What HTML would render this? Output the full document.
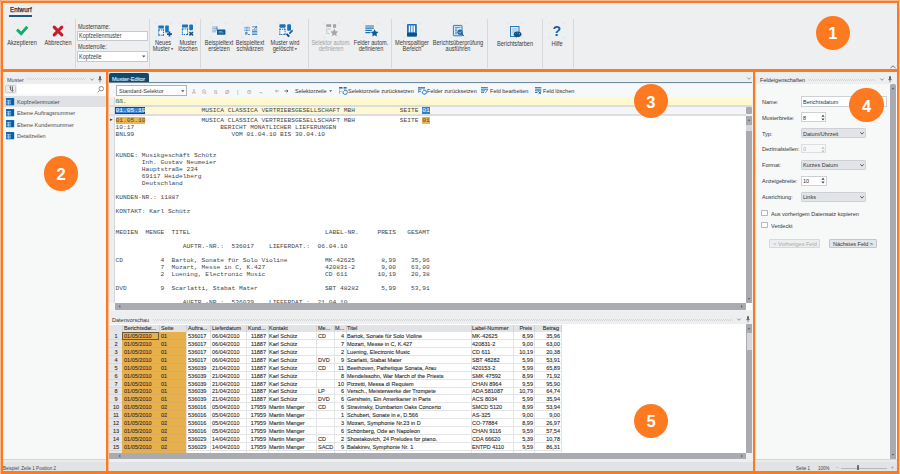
<!DOCTYPE html><html><head><meta charset="utf-8"><style>
html,body{margin:0;padding:0}
body{width:900px;height:474px;overflow:hidden;position:relative;background:#eeeff1;font-family:"Liberation Sans",sans-serif}
div{position:absolute;box-sizing:border-box}
.t{white-space:nowrap;line-height:1}
.r{}
.g{-webkit-text-stroke:0.12px currentColor}
.m{font-family:"Liberation Mono",monospace;white-space:pre;line-height:7px;font-size:6.242px;color:#464646}
svg{position:absolute;overflow:visible}
</style></head><body>
<div class="t" style="left:9.8px;top:7.09px;font-size:6.82px;color:#2a2a2a;transform:scaleX(0.900);transform-origin:0 0;-webkit-text-stroke:0.25px #2a2a2a;letter-spacing:0.15px">Entwurf</div>
<div style="left:9px;top:15px;width:23px;height:2px;background:#1f5a7c;"></div>
<div style="left:75px;top:19px;width:1px;height:49px;background:#d6d8db;"></div>
<div style="left:149px;top:19px;width:1px;height:49px;background:#d6d8db;"></div>
<div style="left:200px;top:19px;width:1px;height:49px;background:#d6d8db;"></div>
<div style="left:308px;top:19px;width:1px;height:49px;background:#d6d8db;"></div>
<div style="left:391px;top:19px;width:1px;height:49px;background:#d6d8db;"></div>
<div style="left:487px;top:19px;width:1px;height:49px;background:#d6d8db;"></div>
<div style="left:542px;top:19px;width:1px;height:49px;background:#d6d8db;"></div>
<div style="left:573px;top:19px;width:1px;height:49px;background:#d6d8db;"></div>
<svg style="left:15px;top:25px" width="14" height="12" viewBox="0 0 14 12"><path d="M2 4.6 L6.2 8.6 L12.3 1.8" fill="none" stroke="#16ad6c" stroke-width="2.9" stroke-linecap="butt" stroke-linejoin="miter"/></svg>
<svg style="left:52px;top:25px" width="12" height="12" viewBox="0 0 12 12"><path d="M2.2 2.2 L9.8 9.8 M9.8 2.2 L2.2 9.8" fill="none" stroke="#c41f29" stroke-width="3.1" stroke-linecap="round"/></svg>
<svg style="left:0;top:0" width="900" height="70"><path d="M14.2 24.6V23H15.799999999999999 M28.2 23H29.8V24.6 M14.2 36.1V37.7H15.799999999999999 M28.2 37.7H29.8V36.1" fill="none" stroke="#dce3eb" stroke-width="0.7"/></svg>
<svg style="left:0;top:0" width="900" height="70"><path d="M50.2 24.6V23H51.800000000000004 M64.2 23H65.8V24.6 M50.2 36.1V37.7H51.800000000000004 M64.2 37.7H65.8V36.1" fill="none" stroke="#dce3eb" stroke-width="0.7"/></svg>
<svg style="left:0;top:0" width="900" height="70"><path d="M155.7 24.6V23H157.29999999999998 M169.70000000000002 23H171.3V24.6 M155.7 36.1V37.7H157.29999999999998 M169.70000000000002 37.7H171.3V36.1" fill="none" stroke="#dce3eb" stroke-width="0.7"/></svg>
<svg style="left:0;top:0" width="900" height="70"><path d="M179.7 24.6V23H181.29999999999998 M193.70000000000002 23H195.3V24.6 M179.7 36.1V37.7H181.29999999999998 M193.70000000000002 37.7H195.3V36.1" fill="none" stroke="#dce3eb" stroke-width="0.7"/></svg>
<svg style="left:0;top:0" width="900" height="70"><path d="M210.7 24.6V23H212.29999999999998 M224.70000000000002 23H226.3V24.6 M210.7 36.1V37.7H212.29999999999998 M224.70000000000002 37.7H226.3V36.1" fill="none" stroke="#dce3eb" stroke-width="0.7"/></svg>
<svg style="left:0;top:0" width="900" height="70"><path d="M242.2 24.6V23H243.79999999999998 M256.2 23H257.8V24.6 M242.2 36.1V37.7H243.79999999999998 M256.2 37.7H257.8V36.1" fill="none" stroke="#dce3eb" stroke-width="0.7"/></svg>
<svg style="left:0;top:0" width="900" height="70"><path d="M277.2 24.6V23H278.8 M291.2 23H292.8V24.6 M277.2 36.1V37.7H278.8 M291.2 37.7H292.8V36.1" fill="none" stroke="#dce3eb" stroke-width="0.7"/></svg>
<svg style="left:0;top:0" width="900" height="70"><path d="M323.7 24.6V23H325.3 M337.7 23H339.3V24.6 M323.7 36.1V37.7H325.3 M337.7 37.7H339.3V36.1" fill="none" stroke="#dce3eb" stroke-width="0.7"/></svg>
<svg style="left:0;top:0" width="900" height="70"><path d="M363.2 24.6V23H364.8 M377.2 23H378.8V24.6 M363.2 36.1V37.7H364.8 M377.2 37.7H378.8V36.1" fill="none" stroke="#dce3eb" stroke-width="0.7"/></svg>
<svg style="left:0;top:0" width="900" height="70"><path d="M404.2 24.6V23H405.8 M418.2 23H419.8V24.6 M404.2 36.1V37.7H405.8 M418.2 37.7H419.8V36.1" fill="none" stroke="#dce3eb" stroke-width="0.7"/></svg>
<svg style="left:0;top:0" width="900" height="70"><path d="M450.5 24.6V23H452.1 M464.5 23H466.1V24.6 M450.5 36.1V37.7H452.1 M464.5 37.7H466.1V36.1" fill="none" stroke="#dce3eb" stroke-width="0.7"/></svg>
<svg style="left:0;top:0" width="900" height="70"><path d="M507.2 24.6V23H508.8 M521.1999999999999 23H522.8V24.6 M507.2 36.1V37.7H508.8 M521.1999999999999 37.7H522.8V36.1" fill="none" stroke="#dce3eb" stroke-width="0.7"/></svg>
<svg style="left:0;top:0" width="900" height="70"><path d="M548.9000000000001 24.6V23H550.5000000000001 M562.9 23H564.5V24.6 M548.9000000000001 36.1V37.7H550.5000000000001 M562.9 37.7H564.5V36.1" fill="none" stroke="#dce3eb" stroke-width="0.7"/></svg>
<div class="t r" style="left:-38px;width:120px;text-align:center;top:39.94px;font-size:6.50px;color:#3a3a3a;transform:scaleX(0.862);transform-origin:50% 0;">Akzeptieren</div>
<div class="t r" style="left:-2px;width:120px;text-align:center;top:39.94px;font-size:6.50px;color:#3a3a3a;transform:scaleX(0.862);transform-origin:50% 0;">Abbrechen</div>
<div class="t" style="left:78px;top:23.85px;font-size:6.38px;color:#3a3a3a;transform:scaleX(0.862);transform-origin:0 0;">Mustername:</div>
<div style="left:77px;top:31px;width:71px;height:10px;background:#ffffff;border:1px solid #c6c9cd"></div>
<div class="t" style="left:79px;top:33.35px;font-size:6.38px;color:#3a3a3a;transform:scaleX(0.862);transform-origin:0 0;">Kopfzeilenmuster</div>
<div class="t" style="left:78px;top:44.35px;font-size:6.38px;color:#3a3a3a;transform:scaleX(0.862);transform-origin:0 0;">Musterrolle:</div>
<div style="left:77px;top:51px;width:71px;height:10.5px;background:#ffffff;border:1px solid #c6c9cd"></div>
<div class="t" style="left:79px;top:53.65px;font-size:6.38px;color:#3a3a3a;transform:scaleX(0.862);transform-origin:0 0;">Kopfzeile</div>
<svg style="left:142px;top:55px" width="4" height="3"><path d="M0 0.5 L3.5 0.5 L1.75 2.5z" fill="#555"/></svg>
<div class="t r" style="left:103px;width:120px;text-align:center;top:39.84px;font-size:6.50px;color:#3a3a3a;transform:scaleX(0.862);transform-origin:50% 0;">Neues</div>
<div class="t r" style="left:103px;width:120px;text-align:center;top:46.04px;font-size:6.50px;color:#3a3a3a;transform:scaleX(0.862);transform-origin:50% 0;">Muster<svg style="position:relative;top:-0.9px;margin-left:1px" width="3.2" height="2.2" viewBox="0 0 3.2 2.2"><path d="M0 0.2H3.2L1.6 2z" fill="#555"/></svg></div>
<div class="t r" style="left:127.5px;width:120px;text-align:center;top:39.84px;font-size:6.50px;color:#3a3a3a;transform:scaleX(0.862);transform-origin:50% 0;">Muster</div>
<div class="t r" style="left:127.5px;width:120px;text-align:center;top:46.04px;font-size:6.50px;color:#3a3a3a;transform:scaleX(0.862);transform-origin:50% 0;">löschen</div>
<div class="t r" style="left:158.5px;width:120px;text-align:center;top:39.84px;font-size:6.50px;color:#3a3a3a;transform:scaleX(0.862);transform-origin:50% 0;">Beispieltext</div>
<div class="t r" style="left:158.5px;width:120px;text-align:center;top:46.04px;font-size:6.50px;color:#3a3a3a;transform:scaleX(0.862);transform-origin:50% 0;">ersetzen</div>
<div class="t r" style="left:190px;width:120px;text-align:center;top:39.84px;font-size:6.50px;color:#3a3a3a;transform:scaleX(0.862);transform-origin:50% 0;">Beispieltext</div>
<div class="t r" style="left:190px;width:120px;text-align:center;top:46.04px;font-size:6.50px;color:#3a3a3a;transform:scaleX(0.862);transform-origin:50% 0;">schwärzen</div>
<div class="t r" style="left:225px;width:120px;text-align:center;top:39.84px;font-size:6.50px;color:#3a3a3a;transform:scaleX(0.862);transform-origin:50% 0;">Muster wird</div>
<div class="t r" style="left:225px;width:120px;text-align:center;top:46.04px;font-size:6.50px;color:#3a3a3a;transform:scaleX(0.862);transform-origin:50% 0;">gelöscht<svg style="position:relative;top:-0.9px;margin-left:1px" width="3.2" height="2.2" viewBox="0 0 3.2 2.2"><path d="M0 0.2H3.2L1.6 2z" fill="#555"/></svg></div>
<div class="t r" style="left:271.3px;width:120px;text-align:center;top:39.84px;font-size:6.50px;color:#a0a2a5;transform:scaleX(0.862);transform-origin:50% 0;">Selektor autom.</div>
<div class="t r" style="left:271.3px;width:120px;text-align:center;top:46.04px;font-size:6.50px;color:#a0a2a5;transform:scaleX(0.862);transform-origin:50% 0;">definieren</div>
<div class="t r" style="left:311px;width:120px;text-align:center;top:39.84px;font-size:6.50px;color:#3a3a3a;transform:scaleX(0.862);transform-origin:50% 0;">Felder autom.</div>
<div class="t r" style="left:311px;width:120px;text-align:center;top:46.04px;font-size:6.50px;color:#3a3a3a;transform:scaleX(0.862);transform-origin:50% 0;">definieren</div>
<div class="t r" style="left:352.4px;width:120px;text-align:center;top:39.84px;font-size:6.50px;color:#3a3a3a;transform:scaleX(0.862);transform-origin:50% 0;">Mehrspaltiger</div>
<div class="t r" style="left:352.4px;width:120px;text-align:center;top:46.04px;font-size:6.50px;color:#3a3a3a;transform:scaleX(0.862);transform-origin:50% 0;">Bereich</div>
<div class="t r" style="left:398.3px;width:120px;text-align:center;top:39.84px;font-size:6.50px;color:#3a3a3a;transform:scaleX(0.862);transform-origin:50% 0;">Berichtsüberprüfung</div>
<div class="t r" style="left:398.3px;width:120px;text-align:center;top:46.04px;font-size:6.50px;color:#3a3a3a;transform:scaleX(0.862);transform-origin:50% 0;">ausführen</div>
<div class="t r" style="left:454.79999999999995px;width:120px;text-align:center;top:41.24px;font-size:6.50px;color:#3a3a3a;transform:scaleX(0.862);transform-origin:50% 0;">Berichtsfarben</div>
<div class="t r" style="left:496.70000000000005px;width:120px;text-align:center;top:41.24px;font-size:6.50px;color:#3a3a3a;transform:scaleX(0.862);transform-origin:50% 0;">Hilfe</div>
<svg style="left:158px;top:24.5px" width="14" height="12" viewBox="0 0 14 12"><rect x="0.3" y="0.5" width="5.6" height="2.9" rx="0.5" fill="#1a72ba"/><rect x="0.7" y="4.9" width="4.8" height="5.3" fill="#f4f7fa" stroke="#1a72ba" stroke-width="1" stroke-dasharray="1.3 0.9"/><rect x="0.19999999999999996" y="4.4" width="1.2" height="1.2" fill="#1a72ba"/><rect x="4.8" y="4.4" width="1.2" height="1.2" fill="#1a72ba"/><rect x="0.19999999999999996" y="9.5" width="1.2" height="1.2" fill="#1a72ba"/><rect x="4.8" y="9.5" width="1.2" height="1.2" fill="#1a72ba"/><rect x="7.2" y="0.5" width="3.6" height="7" rx="0.6" fill="#1a72ba"/><path d="M9 9.1h5M11.5 6.6v5" stroke="#0f5a96" stroke-width="1.7"/></svg>
<svg style="left:182px;top:24px" width="12" height="12" viewBox="0 0 12 12"><rect x="0" y="0.4" width="6" height="3.1" rx="0.6" fill="#1a72ba"/><rect x="0.4" y="5" width="5.2" height="5.5" fill="#f4f7fa" stroke="#1a72ba" stroke-width="1" stroke-dasharray="1.3 0.9"/><rect x="-0.09999999999999998" y="4.5" width="1.2" height="1.2" fill="#1a72ba"/><rect x="4.9" y="4.5" width="1.2" height="1.2" fill="#1a72ba"/><rect x="-0.09999999999999998" y="9.8" width="1.2" height="1.2" fill="#1a72ba"/><rect x="4.9" y="9.8" width="1.2" height="1.2" fill="#1a72ba"/><rect x="7.2" y="0.4" width="3.8" height="5.9" rx="1.2" fill="#1a72ba"/><path d="M7.4 8L11 11.4M11 8L7.4 11.4" stroke="#124f7e" stroke-width="1.5"/></svg>
<svg style="left:211.5px;top:25.5px" width="14" height="10" viewBox="0 0 14 10"><path d="M0.5 1h4M0.5 2.6h5M0.5 4.2h4M0.5 5.8h3" stroke="#1a72ba" stroke-width="0.8" stroke-dasharray="0.8 0.4"/><path d="M5 0.3v4" stroke="#1a72ba" stroke-width="0.7"/><rect x="5" y="3.5" width="8.4" height="5.3" rx="0.6" fill="#0f5a96"/><path d="M6.5 5.5h4M6.5 6.8h5" stroke="#9cc4e6" stroke-width="0.6"/></svg>
<svg style="left:243.5px;top:26px" width="14" height="10" viewBox="0 0 14 10"><path d="M0.5 1.3h5.5M0.5 2.9h5.5M0.5 4.5h5.5" stroke="#1a72ba" stroke-width="0.9" stroke-dasharray="0.9 0.5"/><path d="M8 0.8h2.2l2.5-0.3v2.2" stroke="#1a72ba" stroke-width="0.7" fill="none"/><path d="M10.5 2.6l2.2-2" stroke="#0f5a96" stroke-width="0.9"/><path d="M8 4h5.3M8 5.5h5.3M8 7h5.3M8 8.5h5.3" stroke="#1a72ba" stroke-width="0.75"/><path d="M1.8 6v3M1.8 6.2h1.3v1.4h-1.3M3.6 8.5h2.4" stroke="#3d6f99" stroke-width="0.8" fill="none"/></svg>
<svg style="left:278.5px;top:24px" width="15" height="14" viewBox="0 0 15 14"><rect x="0.4" y="0.2" width="6.2" height="3.6" rx="0.8" fill="#1a72ba"/><rect x="0.8" y="5.2" width="5.2" height="5.3" fill="#f4f7fa" stroke="#1a72ba" stroke-width="1" stroke-dasharray="1.3 0.9"/><rect x="0.30000000000000004" y="4.7" width="1.2" height="1.2" fill="#1a72ba"/><rect x="5.3" y="4.7" width="1.2" height="1.2" fill="#1a72ba"/><rect x="0.30000000000000004" y="9.8" width="1.2" height="1.2" fill="#1a72ba"/><rect x="5.3" y="9.8" width="1.2" height="1.2" fill="#1a72ba"/><rect x="8.2" y="0.2" width="3.8" height="6.6" rx="1" fill="#1a72ba"/><path d="M13.6 6.2L10.4 9.6" stroke="#0f5a96" stroke-width="1.6"/><path d="M8.2 9.2L11 12L9.4 13.3L6.9 10.6z" fill="#0e4d80"/><path d="M8.6 9.6L10.7 11.8" stroke="#7fb0dc" stroke-width="0.4"/></svg>
<svg style="left:325.8px;top:24.2px" width="13" height="13" viewBox="0 0 13 13"><rect x="0.3" y="0.2" width="4.9" height="2.8" fill="#a4a6a9"/><rect x="7" y="0.2" width="3.1" height="3.6" fill="#a4a6a9"/><path d="M0.7 4.5v5.3M0.7 5h4.3M0.7 9.5h3" stroke="#a4a6a9" stroke-width="0.8" stroke-dasharray="0.8 0.5"/><path d="M8.3 4.8l1.2 2.5 2.7 0.3-2 1.9 0.6 2.7-2.5-1.4-2.4 1.4 0.5-2.7-2-1.9 2.7-0.3z" fill="#a4a6a9"/></svg>
<svg style="left:365px;top:25px" width="14" height="12" viewBox="0 0 14 12"><path d="M0.3 1h8.6M0.3 3.2h8.6M0.3 5.4h6.5M0.3 7.6h5.2" stroke="#1a72ba" stroke-width="1.2"/><path d="M9.6 4.2l1.2 2.4 2.7 0.35-2 1.9 0.5 2.6-2.4-1.3-2.4 1.3 0.5-2.6-2-1.9 2.7-0.35z" fill="#0f5a96"/></svg>
<svg style="left:407px;top:24px" width="10" height="13" viewBox="0 0 10 13"><rect x="0" y="0" width="9.8" height="12.4" rx="0.8" fill="#1a72ba"/><rect x="0" y="9" width="9.8" height="3.4" fill="#0c4f84"/><path d="M2.5 1.5v6.8M4.9 1.5v6.8M7.3 1.5v6.8" stroke="#fff" stroke-width="1.5"/></svg>
<svg style="left:453px;top:24.8px" width="12" height="12" viewBox="0 0 12 12"><rect x="0.4" y="0.4" width="8.6" height="10.4" rx="0.4" fill="#dbe9f5" stroke="#1a72ba" stroke-width="0.9"/><path d="M2 2.4h5.5M2 4h2.5M2 5.6h2M2 7.2h2M2 8.8h2" stroke="#1a72ba" stroke-width="0.7"/><circle cx="7" cy="7.2" r="2.4" fill="#1a72ba" stroke="#0e4f85" stroke-width="0.6"/><path d="M5.9 7.2l0.8 0.9 1.5-1.6" stroke="#fff" stroke-width="0.6" fill="none"/><path d="M8.8 9l1.8 1.9" stroke="#0e4f85" stroke-width="1.1"/></svg>
<svg style="left:509.5px;top:25.5px" width="12" height="12" viewBox="0 0 12 12"><rect x="0.5" y="0.5" width="8.5" height="10" fill="#dbe9f5" stroke="#1a72ba" stroke-width="0.9"/><rect x="2" y="2" width="5.5" height="5.5" fill="#b6d3ea"/><ellipse cx="7.6" cy="8.2" rx="3.8" ry="2.6" fill="#0f4f86"/><circle cx="5.6" cy="7.6" r="0.6" fill="#e8325a"/><circle cx="7.5" cy="7" r="0.6" fill="#3cc4e8"/><circle cx="9.4" cy="7.8" r="0.6" fill="#e8e03a"/><path d="M6.2 10.2v1.4" stroke="#0f4f86" stroke-width="0.9"/></svg>
<div class="t" style="left:552.6px;top:24.4px;font-size:14px;font-weight:bold;color:#0b62a8">?</div>
<svg style="left:890px;top:65px" width="6" height="4"><path d="M0.5 3 L3 0.8 L5.5 3" fill="none" stroke="#555" stroke-width="0.8"/></svg>
<div style="left:3px;top:71px;width:103px;height:400px;background:#f7f9f9;"></div>
<div style="left:3px;top:71px;width:103px;height:13px;background:#eceef0;"></div>
<div class="t" style="left:7px;top:76.85px;font-size:6.15px;color:#4a4a4a;transform:scaleX(0.900);transform-origin:0 0;">Muster</div>
<div style="left:27px;top:78px;width:59px;height:1px;background:repeating-linear-gradient(90deg,#d3d5d8 0 1px,transparent 1px 2px)"></div>
<div style="left:28px;top:79px;width:58px;height:1px;background:repeating-linear-gradient(90deg,#d3d5d8 0 1px,transparent 1px 2px)"></div>
<svg style="left:89.5px;top:77.5px" width="4" height="3"><path d="M0.3 0.5 L2 2.3 L3.7 0.5" fill="none" stroke="#666" stroke-width="0.7"/></svg>
<svg style="left:98px;top:76px" width="4" height="7"><path d="M1.1 0.3h1.8v3.2h-1.8z" fill="#555"/><path d="M0.2 3.6h3.6M2 3.6v2.8" stroke="#555" stroke-width="0.7"/></svg>
<div style="left:3px;top:84px;width:103px;height:10px;background:#ffffff;"></div>
<div style="left:3px;top:84px;width:14px;height:10px;background:#eceef0;"></div>
<div style="left:4.8px;top:84.8px;width:11.1px;height:8.6px;background:#e9eaec;border:1px solid #c9cbcf;border-radius:1.5px"></div>
<svg style="left:8.5px;top:86.2px" width="5" height="6" viewBox="0 0 5 6"><path d="M0.6 1.2L1.6 0.4V4.2" fill="none" stroke="#333" stroke-width="0.7"/><path d="M3.4 0.4V5.2M2.5 4.3L3.4 5.3L4.3 4.3" fill="none" stroke="#333" stroke-width="0.7"/></svg>
<svg style="left:97px;top:85.5px" width="7" height="7"><circle cx="4.3" cy="2.7" r="2.2" fill="none" stroke="#777" stroke-width="0.8"/><path d="M2.7 4.3 L0.6 6.4" stroke="#777" stroke-width="0.9"/></svg>
<div style="left:3px;top:95.6px;width:103px;height:11.4px;background:#dfe1e4;"></div>
<svg style="left:5.8px;top:97.8px" width="8.2" height="7.3" viewBox="0 0 8.2 7.3"><rect width="8.2" height="7.3" fill="#0e6bb6"/><path d="M0.6 2.6h4.4M0.6 4.2h4.4M0.6 5.8h4.4M2.6 2.2v4.6" stroke="#e8f1f9" stroke-width="0.55"/><rect x="5.4" y="1.1" width="2.2" height="5.8" fill="#0a5a9c"/></svg>
<div class="t" style="left:16.8px;top:99.15px;font-size:6.15px;color:#4a4a4a;transform:scaleX(0.900);transform-origin:0 0;">Kopfzeilenmuster</div>
<svg style="left:5.8px;top:109.1px" width="8.2" height="7.3" viewBox="0 0 8.2 7.3"><rect width="8.2" height="7.3" fill="#0e6bb6"/><path d="M0.6 2.6h4.4M0.6 4.2h4.4M0.6 5.8h4.4M2.6 2.2v4.6" stroke="#e8f1f9" stroke-width="0.55"/><rect x="5.4" y="1.1" width="2.2" height="5.8" fill="#0a5a9c"/></svg>
<div class="t" style="left:16.8px;top:110.45px;font-size:6.15px;color:#4a4a4a;transform:scaleX(0.900);transform-origin:0 0;">Ebene Auftragsnummer</div>
<svg style="left:5.8px;top:120.4px" width="8.2" height="7.3" viewBox="0 0 8.2 7.3"><rect width="8.2" height="7.3" fill="#0e6bb6"/><path d="M0.6 2.6h4.4M0.6 4.2h4.4M0.6 5.8h4.4M2.6 2.2v4.6" stroke="#e8f1f9" stroke-width="0.55"/><rect x="5.4" y="1.1" width="2.2" height="5.8" fill="#0a5a9c"/></svg>
<div class="t" style="left:16.8px;top:121.75px;font-size:6.15px;color:#4a4a4a;transform:scaleX(0.900);transform-origin:0 0;">Ebene Kundennummer</div>
<svg style="left:5.8px;top:131.7px" width="8.2" height="7.3" viewBox="0 0 8.2 7.3"><rect width="8.2" height="7.3" fill="#0e6bb6"/><path d="M0.6 2.6h4.4M0.6 4.2h4.4M0.6 5.8h4.4M2.6 2.2v4.6" stroke="#e8f1f9" stroke-width="0.55"/><rect x="5.4" y="1.1" width="2.2" height="5.8" fill="#0a5a9c"/></svg>
<div class="t" style="left:16.8px;top:133.05px;font-size:6.15px;color:#4a4a4a;transform:scaleX(0.900);transform-origin:0 0;">Detailzeilen</div>
<div style="left:3px;top:459px;width:103px;height:12px;background:#e2e3e5;border-top:1px solid #d5d6d8"></div>
<div style="left:3px;top:460px;width:103px;height:2px;background:#e9eaec;"></div>
<div class="t" style="left:3px;top:466.15px;font-size:5.03px;color:#444;transform:scaleX(0.900);transform-origin:0 0;">Beispiel: Zeile 1 Position 2</div>
<div style="left:108px;top:71px;width:645px;height:12px;background:#eeeff1;"></div>
<div style="left:109px;top:73px;width:40px;height:10px;background:#0f4a6e;border-radius:2px 2px 0 0"></div>
<div class="t" style="left:112px;top:76.45px;font-size:6.15px;color:#e6f2f8;transform:scaleX(0.900);transform-origin:0 0;-webkit-text-stroke:0.1px #e6f2f8">Muster-Editor</div>
<svg style="left:747px;top:77px" width="4" height="3"><path d="M0.3 0.5 L2 2.3 L3.7 0.5" fill="none" stroke="#777" stroke-width="0.7"/></svg>
<div style="left:109px;top:82.2px;width:643px;height:1.3px;background:#6d8ca2;"></div>
<div style="left:109px;top:83.6px;width:643px;height:13.6px;background:#f7f8f9;"></div>
<div style="left:116px;top:85.3px;width:71px;height:10.5px;background:#ffffff;border:1px solid #aeb1b6"></div>
<div class="t" style="left:119px;top:88.35px;font-size:6.15px;color:#333;transform:scaleX(0.900);transform-origin:0 0;">Standard-Selektor</div>
<svg style="left:181px;top:89.5px" width="4" height="3"><path d="M0 0.3 L3.5 0.3 L1.75 2.3z" fill="#555"/></svg>
<div class="t" style="left:191.5px;top:88.55px;font-size:6.15px;color:#9a9c9f;transform:scaleX(0.900);transform-origin:0 0;">Ā</div>
<div class="t" style="left:202px;top:88.55px;font-size:6.15px;color:#9a9c9f;transform:scaleX(0.900);transform-origin:0 0;">Ñ</div>
<div class="t" style="left:214px;top:88.55px;font-size:6.15px;color:#9a9c9f;transform:scaleX(0.900);transform-origin:0 0;">ß</div>
<div class="t" style="left:225px;top:88.55px;font-size:6.15px;color:#9a9c9f;transform:scaleX(0.900);transform-origin:0 0;">Ø</div>
<div class="t" style="left:237px;top:88.55px;font-size:6.15px;color:#9a9c9f;transform:scaleX(0.900);transform-origin:0 0;">|</div>
<div class="t" style="left:247px;top:88.55px;font-size:6.15px;color:#9a9c9f;transform:scaleX(0.900);transform-origin:0 0;">Θ</div>
<div class="t" style="left:258.5px;top:88.55px;font-size:6.15px;color:#9a9c9f;transform:scaleX(0.900);transform-origin:0 0;">¬</div>
<div class="t" style="left:295px;top:88.35px;font-size:6.15px;color:#333;transform:scaleX(0.900);transform-origin:0 0;">Selektorzeile<svg style="position:relative;top:-0.9px;margin-left:2.5px" width="3.2" height="2.2" viewBox="0 0 3.2 2.2"><path d="M0 0.2H3.2L1.6 2z" fill="#555"/></svg></div>
<div class="t" style="left:348.3px;top:88.35px;font-size:6.15px;color:#333;transform:scaleX(0.900);transform-origin:0 0;">Selektorzeile zurücksetzen</div>
<div class="t" style="left:426.9px;top:88.35px;font-size:6.15px;color:#333;transform:scaleX(0.900);transform-origin:0 0;">Felder zurücksetzen</div>
<div class="t" style="left:490.2px;top:88.35px;font-size:6.15px;color:#333;transform:scaleX(0.900);transform-origin:0 0;">Feld bearbeiten</div>
<div class="t" style="left:543.3px;top:88.35px;font-size:6.15px;color:#333;transform:scaleX(0.900);transform-origin:0 0;">Feld löschen</div>
<svg style="left:275px;top:89px" width="14" height="4" viewBox="0 0 14 4"><path d="M0.5 2h3.5M0.5 2l1.3-1.2M0.5 2l1.3 1.2" stroke="#888" stroke-width="0.6" fill="none"/><path d="M9.5 2h3.5M13 2l-1.3-1.2M13 2l-1.3 1.2" stroke="#333" stroke-width="0.7" fill="none"/></svg>
<svg style="left:338.8px;top:86.8px" width="9" height="8" viewBox="0 0 9 8"><rect x="0" y="0" width="3.6" height="1.6" fill="#1a72ba"/><rect x="4.6" y="0" width="3" height="1.6" fill="#1a72ba"/><path d="M0.5 2.6v4.4M0.5 4.6h2.5" stroke="#4a8fd0" stroke-width="0.8" stroke-dasharray="0.8 0.5"/><path d="M4.2 4.2 A2.2 2.2 0 1 0 6 3" fill="none" stroke="#1a72ba" stroke-width="0.9"/><path d="M4.8 2.3l1.7 0.6-1.2 1.3z" fill="#1a72ba"/></svg>
<svg style="left:417.5px;top:86.8px" width="9" height="8" viewBox="0 0 9 8"><rect x="0" y="0.2" width="7" height="1.3" fill="#1a72ba"/><path d="M0.3 2.8h3M0.3 4.6h2.5" stroke="#1a72ba" stroke-width="0.9"/><path d="M0.5 1.5v4.5" stroke="#4a8fd0" stroke-width="0.6"/><path d="M4.4 4.4 A2.1 2.1 0 1 0 6.1 3.1" fill="none" stroke="#1a72ba" stroke-width="0.9"/><path d="M5 2.4l1.6 0.6-1.1 1.3z" fill="#1a72ba"/></svg>
<svg style="left:480.9px;top:87px" width="8" height="7" viewBox="0 0 8 7"><path d="M0 0.6h6.8M0 2.2h6.8M0 3.8h4M0 5.4h3" stroke="#1a72ba" stroke-width="0.9"/><path d="M7.2 2.6L4.6 5.8L3.9 6.6L4.2 5.5L6.6 2.2z" fill="#0f5a96"/></svg>
<svg style="left:534.9px;top:87px" width="7" height="7" viewBox="0 0 7 7"><path d="M0 0.6h6.3M0 2.2h6.3M0 3.8h6.3" stroke="#1a72ba" stroke-width="0.9"/><path d="M0 5.5h2.5" stroke="#1a72ba" stroke-width="0.9"/><path d="M3.6 4.6l2.4 2.2M6 4.6l-2.4 2.2" stroke="#0f4f86" stroke-width="0.9"/></svg>
<div style="left:109px;top:97.2px;width:637px;height:206px;background:#ffffff;"></div>
<div style="left:109px;top:97.2px;width:6px;height:206px;background:#eceef0;"></div>
<div style="left:114px;top:97.2px;width:0.8px;height:206px;background:#d5d7da;"></div>
<div style="left:115px;top:97.2px;width:637px;height:7.4px;background:#fff9d2;"></div>
<div style="left:109px;top:104.6px;width:643px;height:2.6px;background:#dcdde0;"></div>
<div style="left:115px;top:107.2px;width:631px;height:6.7px;background:#f4f5f6;"></div>
<div style="left:115px;top:107.2px;width:317px;height:6.7px;background:#fff9d2;"></div>
<div style="left:109px;top:113.9px;width:637px;height:2.2px;background:#dcdde0;"></div>
<div class="m" style="left:115.5px;top:98.2px">ßß.</div>
<div style="left:115.3px;top:107.2px;width:30px;height:6.7px;background:#3a86d4;border:0.8px solid #1d446c"></div>
<div class="m" style="left:115.5px;top:107.1px"><span style="color:#fff">01.05.10</span>               MUSICA CLASSICA VERTRIEBSGESELLSCHAFT MBH            SEITE <span style="background:#2f7fd0;color:#fff">01</span></div>
<div style="left:109px;top:116.1px;width:637px;height:187.3px;overflow:hidden">
<div class="m" style="left:6.5px;top:0.7px"><span style="background:#eeb44e">01.05.10</span>               MUSICA CLASSICA VERTRIEBSGESELLSCHAFT MBH            SEITE <span style="background:#eeb44e">01</span>
10:17                       BERICHT MONATLICHER LIEFERUNGEN
BNL99                          VOM 01.04.10 BIS 30.04.10


KUNDE: Musikgeschäft Schütz
       Inh. Gustav Neumeier
       Hauptstraße 234
       69117 Heidelberg
       Deutschland

KUNDEN-NR.: 11887

KONTAKT: Karl Schütz


MEDIEN  MENGE  TITEL                                    LABEL-NR.     PREIS   GESAMT

                  AUFTR.-NR.:  536017    LIEFERDAT.:  06.04.10

CD          4  Bartok, Sonate für Solo Violine          MK-42625       8,99    35,96
            7  Mozart, Messe in C, K.427                420831-2       9,00    63,00
            2  Luening, Electronic Music                CD 611        10,19    20,38

DVD         9  Scarlatti, Stabat Mater                  SBT 48282      5,99    53,91

                  AUFTR.-NR.:  536039    LIEFERDAT.:  21.04.10</div>
<div class="t" style="left:0.5px;top:0.5px;font-size:5px;color:#333">&#9656;</div>
</div>
<div style="left:746px;top:107.2px;width:6px;height:6.5px;background:#a9abb0;border-radius:1px"></div>
<div style="left:746px;top:116.3px;width:6px;height:187px;background:#a9abb0;"></div>
<div style="left:746.4px;top:124.9px;width:5.6px;height:6.3px;background:#d6d7da;"></div>
<div style="left:115px;top:303.4px;width:631px;height:6.4px;background:#a9abb0;"></div>
<div style="left:746px;top:303.4px;width:6px;height:6.4px;background:#ffffff;"></div>
<div style="left:109px;top:303.4px;width:6px;height:6.4px;background:#f4f5f6;"></div>
<div style="left:109px;top:309.8px;width:643px;height:1.2px;background:#f0f1f3;"></div>
<svg style="left:0;top:0" width="900" height="474"><path d="M747.5 120.8L749 119.2L750.5 120.8z" fill="#5d5f63"/></svg>
<svg style="left:0;top:0" width="900" height="474"><path d="M747.5 298.2L749 299.8L750.5 298.2z" fill="#5d5f63"/></svg>
<svg style="left:0;top:0" width="900" height="474"><path d="M120.3 305.1L118.7 306.6L120.3 308.1z" fill="#5d5f63"/></svg>
<svg style="left:0;top:0" width="900" height="474"><path d="M741.1 305.1L742.6999999999999 306.6L741.1 308.1z" fill="#5d5f63"/></svg>
<div style="left:108px;top:311px;width:645px;height:13px;background:#eceef0;"></div>
<div class="t" style="left:112px;top:317.05px;font-size:6.15px;color:#333;transform:scaleX(0.900);transform-origin:0 0;">Datenvorschau</div>
<div style="left:153px;top:318.5px;width:580px;height:1px;background:repeating-linear-gradient(90deg,#d3d5d8 0 1px,transparent 1px 2px)"></div>
<div style="left:154px;top:319.5px;width:579px;height:1px;background:repeating-linear-gradient(90deg,#d3d5d8 0 1px,transparent 1px 2px)"></div>
<svg style="left:737px;top:318px" width="4" height="3"><path d="M0.3 0.5 L2 2.3 L3.7 0.5" fill="none" stroke="#666" stroke-width="0.7"/></svg>
<svg style="left:745.5px;top:316px" width="4" height="7"><path d="M1.1 0.3h1.8v3.2h-1.8z" fill="#555"/><path d="M0.2 3.6h3.6M2 3.6v2.8" stroke="#555" stroke-width="0.7"/></svg>
<div style="left:109px;top:324px;width:637px;height:129.4px;background:#ffffff;"></div>
<div style="left:109px;top:324.6px;width:452px;height:7.5px;background:#e1e3e6;"></div>
<div style="left:122px;top:324.6px;width:0.8px;height:7.5px;background:#cfd1d5;"></div>
<div class="t g" style="left:123.5px;top:325.05px;font-size:6.15px;color:#333;transform:scaleX(0.900);transform-origin:0 0;">Berichtsdat...</div>
<div style="left:159.1px;top:324.6px;width:0.8px;height:7.5px;background:#cfd1d5;"></div>
<div class="t g" style="left:160.6px;top:325.05px;font-size:6.15px;color:#333;transform:scaleX(0.900);transform-origin:0 0;">Seite</div>
<div style="left:186px;top:324.6px;width:0.8px;height:7.5px;background:#cfd1d5;"></div>
<div class="t g" style="left:187.5px;top:325.05px;font-size:6.15px;color:#333;transform:scaleX(0.900);transform-origin:0 0;">Auftra...</div>
<div style="left:210.2px;top:324.6px;width:0.8px;height:7.5px;background:#cfd1d5;"></div>
<div class="t g" style="left:211.7px;top:325.05px;font-size:6.15px;color:#333;transform:scaleX(0.900);transform-origin:0 0;">Lieferdatum</div>
<div style="left:246px;top:324.6px;width:0.8px;height:7.5px;background:#cfd1d5;"></div>
<div class="t g" style="left:247.5px;top:325.05px;font-size:6.15px;color:#333;transform:scaleX(0.900);transform-origin:0 0;">Kund...</div>
<div style="left:267.7px;top:324.6px;width:0.8px;height:7.5px;background:#cfd1d5;"></div>
<div class="t g" style="left:269.2px;top:325.05px;font-size:6.15px;color:#333;transform:scaleX(0.900);transform-origin:0 0;">Kontakt</div>
<div style="left:316.3px;top:324.6px;width:0.8px;height:7.5px;background:#cfd1d5;"></div>
<div class="t g" style="left:317.8px;top:325.05px;font-size:6.15px;color:#333;transform:scaleX(0.900);transform-origin:0 0;">Me...</div>
<div style="left:333.6px;top:324.6px;width:0.8px;height:7.5px;background:#cfd1d5;"></div>
<div class="t g" style="left:335.1px;top:325.05px;font-size:6.15px;color:#333;transform:scaleX(0.900);transform-origin:0 0;">M...</div>
<div style="left:345.6px;top:324.6px;width:0.8px;height:7.5px;background:#cfd1d5;"></div>
<div class="t g" style="left:347.1px;top:325.05px;font-size:6.15px;color:#333;transform:scaleX(0.900);transform-origin:0 0;">Titel</div>
<div style="left:470.8px;top:324.6px;width:0.8px;height:7.5px;background:#cfd1d5;"></div>
<div class="t g" style="left:472.3px;top:325.05px;font-size:6.15px;color:#333;transform:scaleX(0.900);transform-origin:0 0;">Label-Nummer</div>
<div style="left:512.5px;top:324.6px;width:0.8px;height:7.5px;background:#cfd1d5;"></div>
<div class="t g" style="left:412.20000000000005px;width:120px;text-align:right;top:325.05px;font-size:6.15px;color:#333;transform:scaleX(0.9);transform-origin:100% 0;">Preis</div>
<div style="left:534.2px;top:324.6px;width:0.8px;height:7.5px;background:#cfd1d5;"></div>
<div class="t g" style="left:439px;width:120px;text-align:right;top:325.05px;font-size:6.15px;color:#333;transform:scaleX(0.9);transform-origin:100% 0;">Betrag</div>
<div style="left:561px;top:324.6px;width:0.8px;height:7.5px;background:#cfd1d5;"></div>
<div style="left:0;top:324.6px;width:900px;height:128.79999999999995px;overflow:hidden">
<div style="left:109px;top:7.5px;width:13px;height:7.92px;background:#e4e5e8;border-bottom:0.8px solid #d6d8db"></div>
<div class="t g" style="left:55.5px;width:120px;text-align:center;top:8.45px;font-size:6.15px;color:#333;transform:scaleX(0.900);transform-origin:50% 0;">1</div>
<div style="left:122px;top:7.5px;width:64px;height:7.92px;background:#e8b04a;border-bottom:0.8px solid #dbab5a"></div>
<div style="left:186px;top:7.5px;width:375px;height:7.92px;border-bottom:0.8px solid #e3e4e6"></div>
<div class="t g" style="left:123.5px;top:8.45px;font-size:6.15px;color:#303030;transform:scaleX(0.900);transform-origin:0 0;">01/05/2010</div>
<div class="t g" style="left:160.6px;top:8.45px;font-size:6.15px;color:#303030;transform:scaleX(0.900);transform-origin:0 0;">01</div>
<div class="t g" style="left:187.5px;top:8.45px;font-size:6.15px;color:#303030;transform:scaleX(0.900);transform-origin:0 0;">536017</div>
<div class="t g" style="left:211.7px;top:8.45px;font-size:6.15px;color:#303030;transform:scaleX(0.900);transform-origin:0 0;">06/04/2010</div>
<div class="t g" style="left:146.2px;width:120px;text-align:right;top:8.45px;font-size:6.15px;color:#303030;transform:scaleX(0.9);transform-origin:100% 0;">11887</div>
<div class="t g" style="left:269.2px;top:8.45px;font-size:6.15px;color:#303030;transform:scaleX(0.900);transform-origin:0 0;">Karl Schütz</div>
<div class="t g" style="left:317.8px;top:8.45px;font-size:6.15px;color:#303030;transform:scaleX(0.900);transform-origin:0 0;">CD</div>
<div class="t g" style="left:224.10000000000002px;width:120px;text-align:right;top:8.45px;font-size:6.15px;color:#303030;transform:scaleX(0.9);transform-origin:100% 0;">4</div>
<div class="t g" style="left:347.1px;top:8.45px;font-size:6.15px;color:#303030;transform:scaleX(0.900);transform-origin:0 0;">Bartok, Sonate für Solo Violine</div>
<div class="t g" style="left:472.3px;top:8.45px;font-size:6.15px;color:#303030;transform:scaleX(0.900);transform-origin:0 0;">MK-42625</div>
<div class="t g" style="left:412.70000000000005px;width:120px;text-align:right;top:8.45px;font-size:6.15px;color:#303030;transform:scaleX(0.9);transform-origin:100% 0;">8,99</div>
<div class="t g" style="left:439.5px;width:120px;text-align:right;top:8.45px;font-size:6.15px;color:#303030;transform:scaleX(0.9);transform-origin:100% 0;">35,96</div>
<div style="left:186px;top:7.5px;width:0.8px;height:7.92px;background:#e3e4e6"></div>
<div style="left:210.2px;top:7.5px;width:0.8px;height:7.92px;background:#e3e4e6"></div>
<div style="left:246px;top:7.5px;width:0.8px;height:7.92px;background:#e3e4e6"></div>
<div style="left:267.7px;top:7.5px;width:0.8px;height:7.92px;background:#e3e4e6"></div>
<div style="left:316.3px;top:7.5px;width:0.8px;height:7.92px;background:#e3e4e6"></div>
<div style="left:333.6px;top:7.5px;width:0.8px;height:7.92px;background:#e3e4e6"></div>
<div style="left:345.6px;top:7.5px;width:0.8px;height:7.92px;background:#e3e4e6"></div>
<div style="left:470.8px;top:7.5px;width:0.8px;height:7.92px;background:#e3e4e6"></div>
<div style="left:512.5px;top:7.5px;width:0.8px;height:7.92px;background:#e3e4e6"></div>
<div style="left:534.2px;top:7.5px;width:0.8px;height:7.92px;background:#e3e4e6"></div>
<div style="left:561px;top:7.5px;width:0.8px;height:7.92px;background:#e3e4e6"></div>
<div style="left:109px;top:15.42px;width:13px;height:7.92px;background:#e4e5e8;border-bottom:0.8px solid #d6d8db"></div>
<div class="t g" style="left:55.5px;width:120px;text-align:center;top:16.37px;font-size:6.15px;color:#333;transform:scaleX(0.900);transform-origin:50% 0;">2</div>
<div style="left:122px;top:15.42px;width:64px;height:7.92px;background:#e8b04a;border-bottom:0.8px solid #dbab5a"></div>
<div style="left:186px;top:15.42px;width:375px;height:7.92px;border-bottom:0.8px solid #e3e4e6"></div>
<div class="t g" style="left:123.5px;top:16.37px;font-size:6.15px;color:#303030;transform:scaleX(0.900);transform-origin:0 0;">01/05/2010</div>
<div class="t g" style="left:160.6px;top:16.37px;font-size:6.15px;color:#303030;transform:scaleX(0.900);transform-origin:0 0;">01</div>
<div class="t g" style="left:187.5px;top:16.37px;font-size:6.15px;color:#303030;transform:scaleX(0.900);transform-origin:0 0;">536017</div>
<div class="t g" style="left:211.7px;top:16.37px;font-size:6.15px;color:#303030;transform:scaleX(0.900);transform-origin:0 0;">06/04/2010</div>
<div class="t g" style="left:146.2px;width:120px;text-align:right;top:16.37px;font-size:6.15px;color:#303030;transform:scaleX(0.9);transform-origin:100% 0;">11887</div>
<div class="t g" style="left:269.2px;top:16.37px;font-size:6.15px;color:#303030;transform:scaleX(0.900);transform-origin:0 0;">Karl Schütz</div>
<div class="t g" style="left:317.8px;top:16.37px;font-size:6.15px;color:#303030;transform:scaleX(0.900);transform-origin:0 0;"></div>
<div class="t g" style="left:224.10000000000002px;width:120px;text-align:right;top:16.37px;font-size:6.15px;color:#303030;transform:scaleX(0.9);transform-origin:100% 0;">7</div>
<div class="t g" style="left:347.1px;top:16.37px;font-size:6.15px;color:#303030;transform:scaleX(0.900);transform-origin:0 0;">Mozart, Messe in C, K.427</div>
<div class="t g" style="left:472.3px;top:16.37px;font-size:6.15px;color:#303030;transform:scaleX(0.900);transform-origin:0 0;">420831-2</div>
<div class="t g" style="left:412.70000000000005px;width:120px;text-align:right;top:16.37px;font-size:6.15px;color:#303030;transform:scaleX(0.9);transform-origin:100% 0;">9,00</div>
<div class="t g" style="left:439.5px;width:120px;text-align:right;top:16.37px;font-size:6.15px;color:#303030;transform:scaleX(0.9);transform-origin:100% 0;">63,00</div>
<div style="left:186px;top:15.42px;width:0.8px;height:7.92px;background:#e3e4e6"></div>
<div style="left:210.2px;top:15.42px;width:0.8px;height:7.92px;background:#e3e4e6"></div>
<div style="left:246px;top:15.42px;width:0.8px;height:7.92px;background:#e3e4e6"></div>
<div style="left:267.7px;top:15.42px;width:0.8px;height:7.92px;background:#e3e4e6"></div>
<div style="left:316.3px;top:15.42px;width:0.8px;height:7.92px;background:#e3e4e6"></div>
<div style="left:333.6px;top:15.42px;width:0.8px;height:7.92px;background:#e3e4e6"></div>
<div style="left:345.6px;top:15.42px;width:0.8px;height:7.92px;background:#e3e4e6"></div>
<div style="left:470.8px;top:15.42px;width:0.8px;height:7.92px;background:#e3e4e6"></div>
<div style="left:512.5px;top:15.42px;width:0.8px;height:7.92px;background:#e3e4e6"></div>
<div style="left:534.2px;top:15.42px;width:0.8px;height:7.92px;background:#e3e4e6"></div>
<div style="left:561px;top:15.42px;width:0.8px;height:7.92px;background:#e3e4e6"></div>
<div style="left:109px;top:23.34px;width:13px;height:7.92px;background:#e4e5e8;border-bottom:0.8px solid #d6d8db"></div>
<div class="t g" style="left:55.5px;width:120px;text-align:center;top:24.29px;font-size:6.15px;color:#333;transform:scaleX(0.900);transform-origin:50% 0;">3</div>
<div style="left:122px;top:23.34px;width:64px;height:7.92px;background:#e8b04a;border-bottom:0.8px solid #dbab5a"></div>
<div style="left:186px;top:23.34px;width:375px;height:7.92px;border-bottom:0.8px solid #e3e4e6"></div>
<div class="t g" style="left:123.5px;top:24.29px;font-size:6.15px;color:#303030;transform:scaleX(0.900);transform-origin:0 0;">01/05/2010</div>
<div class="t g" style="left:160.6px;top:24.29px;font-size:6.15px;color:#303030;transform:scaleX(0.900);transform-origin:0 0;">01</div>
<div class="t g" style="left:187.5px;top:24.29px;font-size:6.15px;color:#303030;transform:scaleX(0.900);transform-origin:0 0;">536017</div>
<div class="t g" style="left:211.7px;top:24.29px;font-size:6.15px;color:#303030;transform:scaleX(0.900);transform-origin:0 0;">06/04/2010</div>
<div class="t g" style="left:146.2px;width:120px;text-align:right;top:24.29px;font-size:6.15px;color:#303030;transform:scaleX(0.9);transform-origin:100% 0;">11887</div>
<div class="t g" style="left:269.2px;top:24.29px;font-size:6.15px;color:#303030;transform:scaleX(0.900);transform-origin:0 0;">Karl Schütz</div>
<div class="t g" style="left:317.8px;top:24.29px;font-size:6.15px;color:#303030;transform:scaleX(0.900);transform-origin:0 0;"></div>
<div class="t g" style="left:224.10000000000002px;width:120px;text-align:right;top:24.29px;font-size:6.15px;color:#303030;transform:scaleX(0.9);transform-origin:100% 0;">2</div>
<div class="t g" style="left:347.1px;top:24.29px;font-size:6.15px;color:#303030;transform:scaleX(0.900);transform-origin:0 0;">Luening, Electronic Music</div>
<div class="t g" style="left:472.3px;top:24.29px;font-size:6.15px;color:#303030;transform:scaleX(0.900);transform-origin:0 0;">CD 611</div>
<div class="t g" style="left:412.70000000000005px;width:120px;text-align:right;top:24.29px;font-size:6.15px;color:#303030;transform:scaleX(0.9);transform-origin:100% 0;">10,19</div>
<div class="t g" style="left:439.5px;width:120px;text-align:right;top:24.29px;font-size:6.15px;color:#303030;transform:scaleX(0.9);transform-origin:100% 0;">20,38</div>
<div style="left:186px;top:23.34px;width:0.8px;height:7.92px;background:#e3e4e6"></div>
<div style="left:210.2px;top:23.34px;width:0.8px;height:7.92px;background:#e3e4e6"></div>
<div style="left:246px;top:23.34px;width:0.8px;height:7.92px;background:#e3e4e6"></div>
<div style="left:267.7px;top:23.34px;width:0.8px;height:7.92px;background:#e3e4e6"></div>
<div style="left:316.3px;top:23.34px;width:0.8px;height:7.92px;background:#e3e4e6"></div>
<div style="left:333.6px;top:23.34px;width:0.8px;height:7.92px;background:#e3e4e6"></div>
<div style="left:345.6px;top:23.34px;width:0.8px;height:7.92px;background:#e3e4e6"></div>
<div style="left:470.8px;top:23.34px;width:0.8px;height:7.92px;background:#e3e4e6"></div>
<div style="left:512.5px;top:23.34px;width:0.8px;height:7.92px;background:#e3e4e6"></div>
<div style="left:534.2px;top:23.34px;width:0.8px;height:7.92px;background:#e3e4e6"></div>
<div style="left:561px;top:23.34px;width:0.8px;height:7.92px;background:#e3e4e6"></div>
<div style="left:109px;top:31.259999999999998px;width:13px;height:7.92px;background:#e4e5e8;border-bottom:0.8px solid #d6d8db"></div>
<div class="t g" style="left:55.5px;width:120px;text-align:center;top:32.21px;font-size:6.15px;color:#333;transform:scaleX(0.900);transform-origin:50% 0;">4</div>
<div style="left:122px;top:31.259999999999998px;width:64px;height:7.92px;background:#e8b04a;border-bottom:0.8px solid #dbab5a"></div>
<div style="left:186px;top:31.259999999999998px;width:375px;height:7.92px;border-bottom:0.8px solid #e3e4e6"></div>
<div class="t g" style="left:123.5px;top:32.21px;font-size:6.15px;color:#303030;transform:scaleX(0.900);transform-origin:0 0;">01/05/2010</div>
<div class="t g" style="left:160.6px;top:32.21px;font-size:6.15px;color:#303030;transform:scaleX(0.900);transform-origin:0 0;">01</div>
<div class="t g" style="left:187.5px;top:32.21px;font-size:6.15px;color:#303030;transform:scaleX(0.900);transform-origin:0 0;">536017</div>
<div class="t g" style="left:211.7px;top:32.21px;font-size:6.15px;color:#303030;transform:scaleX(0.900);transform-origin:0 0;">06/04/2010</div>
<div class="t g" style="left:146.2px;width:120px;text-align:right;top:32.21px;font-size:6.15px;color:#303030;transform:scaleX(0.9);transform-origin:100% 0;">11887</div>
<div class="t g" style="left:269.2px;top:32.21px;font-size:6.15px;color:#303030;transform:scaleX(0.900);transform-origin:0 0;">Karl Schütz</div>
<div class="t g" style="left:317.8px;top:32.21px;font-size:6.15px;color:#303030;transform:scaleX(0.900);transform-origin:0 0;">DVD</div>
<div class="t g" style="left:224.10000000000002px;width:120px;text-align:right;top:32.21px;font-size:6.15px;color:#303030;transform:scaleX(0.9);transform-origin:100% 0;">9</div>
<div class="t g" style="left:347.1px;top:32.21px;font-size:6.15px;color:#303030;transform:scaleX(0.900);transform-origin:0 0;">Scarlatti, Stabat Mater</div>
<div class="t g" style="left:472.3px;top:32.21px;font-size:6.15px;color:#303030;transform:scaleX(0.900);transform-origin:0 0;">SBT 48282</div>
<div class="t g" style="left:412.70000000000005px;width:120px;text-align:right;top:32.21px;font-size:6.15px;color:#303030;transform:scaleX(0.9);transform-origin:100% 0;">5,99</div>
<div class="t g" style="left:439.5px;width:120px;text-align:right;top:32.21px;font-size:6.15px;color:#303030;transform:scaleX(0.9);transform-origin:100% 0;">53,91</div>
<div style="left:186px;top:31.259999999999998px;width:0.8px;height:7.92px;background:#e3e4e6"></div>
<div style="left:210.2px;top:31.259999999999998px;width:0.8px;height:7.92px;background:#e3e4e6"></div>
<div style="left:246px;top:31.259999999999998px;width:0.8px;height:7.92px;background:#e3e4e6"></div>
<div style="left:267.7px;top:31.259999999999998px;width:0.8px;height:7.92px;background:#e3e4e6"></div>
<div style="left:316.3px;top:31.259999999999998px;width:0.8px;height:7.92px;background:#e3e4e6"></div>
<div style="left:333.6px;top:31.259999999999998px;width:0.8px;height:7.92px;background:#e3e4e6"></div>
<div style="left:345.6px;top:31.259999999999998px;width:0.8px;height:7.92px;background:#e3e4e6"></div>
<div style="left:470.8px;top:31.259999999999998px;width:0.8px;height:7.92px;background:#e3e4e6"></div>
<div style="left:512.5px;top:31.259999999999998px;width:0.8px;height:7.92px;background:#e3e4e6"></div>
<div style="left:534.2px;top:31.259999999999998px;width:0.8px;height:7.92px;background:#e3e4e6"></div>
<div style="left:561px;top:31.259999999999998px;width:0.8px;height:7.92px;background:#e3e4e6"></div>
<div style="left:109px;top:39.18px;width:13px;height:7.92px;background:#e4e5e8;border-bottom:0.8px solid #d6d8db"></div>
<div class="t g" style="left:55.5px;width:120px;text-align:center;top:40.13px;font-size:6.15px;color:#333;transform:scaleX(0.900);transform-origin:50% 0;">5</div>
<div style="left:122px;top:39.18px;width:64px;height:7.92px;background:#e8b04a;border-bottom:0.8px solid #dbab5a"></div>
<div style="left:186px;top:39.18px;width:375px;height:7.92px;border-bottom:0.8px solid #e3e4e6"></div>
<div class="t g" style="left:123.5px;top:40.13px;font-size:6.15px;color:#303030;transform:scaleX(0.900);transform-origin:0 0;">01/05/2010</div>
<div class="t g" style="left:160.6px;top:40.13px;font-size:6.15px;color:#303030;transform:scaleX(0.900);transform-origin:0 0;">01</div>
<div class="t g" style="left:187.5px;top:40.13px;font-size:6.15px;color:#303030;transform:scaleX(0.900);transform-origin:0 0;">536039</div>
<div class="t g" style="left:211.7px;top:40.13px;font-size:6.15px;color:#303030;transform:scaleX(0.900);transform-origin:0 0;">21/04/2010</div>
<div class="t g" style="left:146.2px;width:120px;text-align:right;top:40.13px;font-size:6.15px;color:#303030;transform:scaleX(0.9);transform-origin:100% 0;">11887</div>
<div class="t g" style="left:269.2px;top:40.13px;font-size:6.15px;color:#303030;transform:scaleX(0.900);transform-origin:0 0;">Karl Schütz</div>
<div class="t g" style="left:317.8px;top:40.13px;font-size:6.15px;color:#303030;transform:scaleX(0.900);transform-origin:0 0;">CD</div>
<div class="t g" style="left:224.10000000000002px;width:120px;text-align:right;top:40.13px;font-size:6.15px;color:#303030;transform:scaleX(0.9);transform-origin:100% 0;">11</div>
<div class="t g" style="left:347.1px;top:40.13px;font-size:6.15px;color:#303030;transform:scaleX(0.900);transform-origin:0 0;">Beethoven, Pathetique Sonata, Arau</div>
<div class="t g" style="left:472.3px;top:40.13px;font-size:6.15px;color:#303030;transform:scaleX(0.900);transform-origin:0 0;">420153-2</div>
<div class="t g" style="left:412.70000000000005px;width:120px;text-align:right;top:40.13px;font-size:6.15px;color:#303030;transform:scaleX(0.9);transform-origin:100% 0;">5,99</div>
<div class="t g" style="left:439.5px;width:120px;text-align:right;top:40.13px;font-size:6.15px;color:#303030;transform:scaleX(0.9);transform-origin:100% 0;">65,89</div>
<div style="left:186px;top:39.18px;width:0.8px;height:7.92px;background:#e3e4e6"></div>
<div style="left:210.2px;top:39.18px;width:0.8px;height:7.92px;background:#e3e4e6"></div>
<div style="left:246px;top:39.18px;width:0.8px;height:7.92px;background:#e3e4e6"></div>
<div style="left:267.7px;top:39.18px;width:0.8px;height:7.92px;background:#e3e4e6"></div>
<div style="left:316.3px;top:39.18px;width:0.8px;height:7.92px;background:#e3e4e6"></div>
<div style="left:333.6px;top:39.18px;width:0.8px;height:7.92px;background:#e3e4e6"></div>
<div style="left:345.6px;top:39.18px;width:0.8px;height:7.92px;background:#e3e4e6"></div>
<div style="left:470.8px;top:39.18px;width:0.8px;height:7.92px;background:#e3e4e6"></div>
<div style="left:512.5px;top:39.18px;width:0.8px;height:7.92px;background:#e3e4e6"></div>
<div style="left:534.2px;top:39.18px;width:0.8px;height:7.92px;background:#e3e4e6"></div>
<div style="left:561px;top:39.18px;width:0.8px;height:7.92px;background:#e3e4e6"></div>
<div style="left:109px;top:47.1px;width:13px;height:7.92px;background:#e4e5e8;border-bottom:0.8px solid #d6d8db"></div>
<div class="t g" style="left:55.5px;width:120px;text-align:center;top:48.05px;font-size:6.15px;color:#333;transform:scaleX(0.900);transform-origin:50% 0;">6</div>
<div style="left:122px;top:47.1px;width:64px;height:7.92px;background:#e8b04a;border-bottom:0.8px solid #dbab5a"></div>
<div style="left:186px;top:47.1px;width:375px;height:7.92px;border-bottom:0.8px solid #e3e4e6"></div>
<div class="t g" style="left:123.5px;top:48.05px;font-size:6.15px;color:#303030;transform:scaleX(0.900);transform-origin:0 0;">01/05/2010</div>
<div class="t g" style="left:160.6px;top:48.05px;font-size:6.15px;color:#303030;transform:scaleX(0.900);transform-origin:0 0;">01</div>
<div class="t g" style="left:187.5px;top:48.05px;font-size:6.15px;color:#303030;transform:scaleX(0.900);transform-origin:0 0;">536039</div>
<div class="t g" style="left:211.7px;top:48.05px;font-size:6.15px;color:#303030;transform:scaleX(0.900);transform-origin:0 0;">21/04/2010</div>
<div class="t g" style="left:146.2px;width:120px;text-align:right;top:48.05px;font-size:6.15px;color:#303030;transform:scaleX(0.9);transform-origin:100% 0;">11887</div>
<div class="t g" style="left:269.2px;top:48.05px;font-size:6.15px;color:#303030;transform:scaleX(0.900);transform-origin:0 0;">Karl Schütz</div>
<div class="t g" style="left:317.8px;top:48.05px;font-size:6.15px;color:#303030;transform:scaleX(0.900);transform-origin:0 0;"></div>
<div class="t g" style="left:224.10000000000002px;width:120px;text-align:right;top:48.05px;font-size:6.15px;color:#303030;transform:scaleX(0.9);transform-origin:100% 0;">8</div>
<div class="t g" style="left:347.1px;top:48.05px;font-size:6.15px;color:#303030;transform:scaleX(0.900);transform-origin:0 0;">Mendelssohn, War March of the Priests</div>
<div class="t g" style="left:472.3px;top:48.05px;font-size:6.15px;color:#303030;transform:scaleX(0.900);transform-origin:0 0;">SMK 47592</div>
<div class="t g" style="left:412.70000000000005px;width:120px;text-align:right;top:48.05px;font-size:6.15px;color:#303030;transform:scaleX(0.9);transform-origin:100% 0;">8,99</div>
<div class="t g" style="left:439.5px;width:120px;text-align:right;top:48.05px;font-size:6.15px;color:#303030;transform:scaleX(0.9);transform-origin:100% 0;">71,92</div>
<div style="left:186px;top:47.1px;width:0.8px;height:7.92px;background:#e3e4e6"></div>
<div style="left:210.2px;top:47.1px;width:0.8px;height:7.92px;background:#e3e4e6"></div>
<div style="left:246px;top:47.1px;width:0.8px;height:7.92px;background:#e3e4e6"></div>
<div style="left:267.7px;top:47.1px;width:0.8px;height:7.92px;background:#e3e4e6"></div>
<div style="left:316.3px;top:47.1px;width:0.8px;height:7.92px;background:#e3e4e6"></div>
<div style="left:333.6px;top:47.1px;width:0.8px;height:7.92px;background:#e3e4e6"></div>
<div style="left:345.6px;top:47.1px;width:0.8px;height:7.92px;background:#e3e4e6"></div>
<div style="left:470.8px;top:47.1px;width:0.8px;height:7.92px;background:#e3e4e6"></div>
<div style="left:512.5px;top:47.1px;width:0.8px;height:7.92px;background:#e3e4e6"></div>
<div style="left:534.2px;top:47.1px;width:0.8px;height:7.92px;background:#e3e4e6"></div>
<div style="left:561px;top:47.1px;width:0.8px;height:7.92px;background:#e3e4e6"></div>
<div style="left:109px;top:55.019999999999996px;width:13px;height:7.92px;background:#e4e5e8;border-bottom:0.8px solid #d6d8db"></div>
<div class="t g" style="left:55.5px;width:120px;text-align:center;top:55.97px;font-size:6.15px;color:#333;transform:scaleX(0.900);transform-origin:50% 0;">7</div>
<div style="left:122px;top:55.019999999999996px;width:64px;height:7.92px;background:#e8b04a;border-bottom:0.8px solid #dbab5a"></div>
<div style="left:186px;top:55.019999999999996px;width:375px;height:7.92px;border-bottom:0.8px solid #e3e4e6"></div>
<div class="t g" style="left:123.5px;top:55.97px;font-size:6.15px;color:#303030;transform:scaleX(0.900);transform-origin:0 0;">01/05/2010</div>
<div class="t g" style="left:160.6px;top:55.97px;font-size:6.15px;color:#303030;transform:scaleX(0.900);transform-origin:0 0;">01</div>
<div class="t g" style="left:187.5px;top:55.97px;font-size:6.15px;color:#303030;transform:scaleX(0.900);transform-origin:0 0;">536039</div>
<div class="t g" style="left:211.7px;top:55.97px;font-size:6.15px;color:#303030;transform:scaleX(0.900);transform-origin:0 0;">21/04/2010</div>
<div class="t g" style="left:146.2px;width:120px;text-align:right;top:55.97px;font-size:6.15px;color:#303030;transform:scaleX(0.9);transform-origin:100% 0;">11887</div>
<div class="t g" style="left:269.2px;top:55.97px;font-size:6.15px;color:#303030;transform:scaleX(0.900);transform-origin:0 0;">Karl Schütz</div>
<div class="t g" style="left:317.8px;top:55.97px;font-size:6.15px;color:#303030;transform:scaleX(0.900);transform-origin:0 0;"></div>
<div class="t g" style="left:224.10000000000002px;width:120px;text-align:right;top:55.97px;font-size:6.15px;color:#303030;transform:scaleX(0.9);transform-origin:100% 0;">10</div>
<div class="t g" style="left:347.1px;top:55.97px;font-size:6.15px;color:#303030;transform:scaleX(0.900);transform-origin:0 0;">Pizzetti, Messa di Requiem</div>
<div class="t g" style="left:472.3px;top:55.97px;font-size:6.15px;color:#303030;transform:scaleX(0.900);transform-origin:0 0;">CHAN 8964</div>
<div class="t g" style="left:412.70000000000005px;width:120px;text-align:right;top:55.97px;font-size:6.15px;color:#303030;transform:scaleX(0.9);transform-origin:100% 0;">9,59</div>
<div class="t g" style="left:439.5px;width:120px;text-align:right;top:55.97px;font-size:6.15px;color:#303030;transform:scaleX(0.9);transform-origin:100% 0;">95,90</div>
<div style="left:186px;top:55.019999999999996px;width:0.8px;height:7.92px;background:#e3e4e6"></div>
<div style="left:210.2px;top:55.019999999999996px;width:0.8px;height:7.92px;background:#e3e4e6"></div>
<div style="left:246px;top:55.019999999999996px;width:0.8px;height:7.92px;background:#e3e4e6"></div>
<div style="left:267.7px;top:55.019999999999996px;width:0.8px;height:7.92px;background:#e3e4e6"></div>
<div style="left:316.3px;top:55.019999999999996px;width:0.8px;height:7.92px;background:#e3e4e6"></div>
<div style="left:333.6px;top:55.019999999999996px;width:0.8px;height:7.92px;background:#e3e4e6"></div>
<div style="left:345.6px;top:55.019999999999996px;width:0.8px;height:7.92px;background:#e3e4e6"></div>
<div style="left:470.8px;top:55.019999999999996px;width:0.8px;height:7.92px;background:#e3e4e6"></div>
<div style="left:512.5px;top:55.019999999999996px;width:0.8px;height:7.92px;background:#e3e4e6"></div>
<div style="left:534.2px;top:55.019999999999996px;width:0.8px;height:7.92px;background:#e3e4e6"></div>
<div style="left:561px;top:55.019999999999996px;width:0.8px;height:7.92px;background:#e3e4e6"></div>
<div style="left:109px;top:62.94px;width:13px;height:7.92px;background:#e4e5e8;border-bottom:0.8px solid #d6d8db"></div>
<div class="t g" style="left:55.5px;width:120px;text-align:center;top:63.89px;font-size:6.15px;color:#333;transform:scaleX(0.900);transform-origin:50% 0;">8</div>
<div style="left:122px;top:62.94px;width:64px;height:7.92px;background:#e8b04a;border-bottom:0.8px solid #dbab5a"></div>
<div style="left:186px;top:62.94px;width:375px;height:7.92px;border-bottom:0.8px solid #e3e4e6"></div>
<div class="t g" style="left:123.5px;top:63.89px;font-size:6.15px;color:#303030;transform:scaleX(0.900);transform-origin:0 0;">01/05/2010</div>
<div class="t g" style="left:160.6px;top:63.89px;font-size:6.15px;color:#303030;transform:scaleX(0.900);transform-origin:0 0;">01</div>
<div class="t g" style="left:187.5px;top:63.89px;font-size:6.15px;color:#303030;transform:scaleX(0.900);transform-origin:0 0;">536039</div>
<div class="t g" style="left:211.7px;top:63.89px;font-size:6.15px;color:#303030;transform:scaleX(0.900);transform-origin:0 0;">21/04/2010</div>
<div class="t g" style="left:146.2px;width:120px;text-align:right;top:63.89px;font-size:6.15px;color:#303030;transform:scaleX(0.9);transform-origin:100% 0;">11887</div>
<div class="t g" style="left:269.2px;top:63.89px;font-size:6.15px;color:#303030;transform:scaleX(0.900);transform-origin:0 0;">Karl Schütz</div>
<div class="t g" style="left:317.8px;top:63.89px;font-size:6.15px;color:#303030;transform:scaleX(0.900);transform-origin:0 0;">LP</div>
<div class="t g" style="left:224.10000000000002px;width:120px;text-align:right;top:63.89px;font-size:6.15px;color:#303030;transform:scaleX(0.9);transform-origin:100% 0;">6</div>
<div class="t g" style="left:347.1px;top:63.89px;font-size:6.15px;color:#303030;transform:scaleX(0.900);transform-origin:0 0;">Versch., Meisterwerke der Trompete</div>
<div class="t g" style="left:472.3px;top:63.89px;font-size:6.15px;color:#303030;transform:scaleX(0.900);transform-origin:0 0;">ADA 581087</div>
<div class="t g" style="left:412.70000000000005px;width:120px;text-align:right;top:63.89px;font-size:6.15px;color:#303030;transform:scaleX(0.9);transform-origin:100% 0;">10,79</div>
<div class="t g" style="left:439.5px;width:120px;text-align:right;top:63.89px;font-size:6.15px;color:#303030;transform:scaleX(0.9);transform-origin:100% 0;">64,74</div>
<div style="left:186px;top:62.94px;width:0.8px;height:7.92px;background:#e3e4e6"></div>
<div style="left:210.2px;top:62.94px;width:0.8px;height:7.92px;background:#e3e4e6"></div>
<div style="left:246px;top:62.94px;width:0.8px;height:7.92px;background:#e3e4e6"></div>
<div style="left:267.7px;top:62.94px;width:0.8px;height:7.92px;background:#e3e4e6"></div>
<div style="left:316.3px;top:62.94px;width:0.8px;height:7.92px;background:#e3e4e6"></div>
<div style="left:333.6px;top:62.94px;width:0.8px;height:7.92px;background:#e3e4e6"></div>
<div style="left:345.6px;top:62.94px;width:0.8px;height:7.92px;background:#e3e4e6"></div>
<div style="left:470.8px;top:62.94px;width:0.8px;height:7.92px;background:#e3e4e6"></div>
<div style="left:512.5px;top:62.94px;width:0.8px;height:7.92px;background:#e3e4e6"></div>
<div style="left:534.2px;top:62.94px;width:0.8px;height:7.92px;background:#e3e4e6"></div>
<div style="left:561px;top:62.94px;width:0.8px;height:7.92px;background:#e3e4e6"></div>
<div style="left:109px;top:70.86px;width:13px;height:7.92px;background:#e4e5e8;border-bottom:0.8px solid #d6d8db"></div>
<div class="t g" style="left:55.5px;width:120px;text-align:center;top:71.81px;font-size:6.15px;color:#333;transform:scaleX(0.900);transform-origin:50% 0;">9</div>
<div style="left:122px;top:70.86px;width:64px;height:7.92px;background:#e8b04a;border-bottom:0.8px solid #dbab5a"></div>
<div style="left:186px;top:70.86px;width:375px;height:7.92px;border-bottom:0.8px solid #e3e4e6"></div>
<div class="t g" style="left:123.5px;top:71.81px;font-size:6.15px;color:#303030;transform:scaleX(0.900);transform-origin:0 0;">01/05/2010</div>
<div class="t g" style="left:160.6px;top:71.81px;font-size:6.15px;color:#303030;transform:scaleX(0.900);transform-origin:0 0;">01</div>
<div class="t g" style="left:187.5px;top:71.81px;font-size:6.15px;color:#303030;transform:scaleX(0.900);transform-origin:0 0;">536039</div>
<div class="t g" style="left:211.7px;top:71.81px;font-size:6.15px;color:#303030;transform:scaleX(0.900);transform-origin:0 0;">21/04/2010</div>
<div class="t g" style="left:146.2px;width:120px;text-align:right;top:71.81px;font-size:6.15px;color:#303030;transform:scaleX(0.9);transform-origin:100% 0;">11887</div>
<div class="t g" style="left:269.2px;top:71.81px;font-size:6.15px;color:#303030;transform:scaleX(0.900);transform-origin:0 0;">Karl Schütz</div>
<div class="t g" style="left:317.8px;top:71.81px;font-size:6.15px;color:#303030;transform:scaleX(0.900);transform-origin:0 0;">DVD</div>
<div class="t g" style="left:224.10000000000002px;width:120px;text-align:right;top:71.81px;font-size:6.15px;color:#303030;transform:scaleX(0.9);transform-origin:100% 0;">6</div>
<div class="t g" style="left:347.1px;top:71.81px;font-size:6.15px;color:#303030;transform:scaleX(0.900);transform-origin:0 0;">Gershwin, Ein Amerikaner in Paris</div>
<div class="t g" style="left:472.3px;top:71.81px;font-size:6.15px;color:#303030;transform:scaleX(0.900);transform-origin:0 0;">ACS 8034</div>
<div class="t g" style="left:412.70000000000005px;width:120px;text-align:right;top:71.81px;font-size:6.15px;color:#303030;transform:scaleX(0.9);transform-origin:100% 0;">5,99</div>
<div class="t g" style="left:439.5px;width:120px;text-align:right;top:71.81px;font-size:6.15px;color:#303030;transform:scaleX(0.9);transform-origin:100% 0;">35,94</div>
<div style="left:186px;top:70.86px;width:0.8px;height:7.92px;background:#e3e4e6"></div>
<div style="left:210.2px;top:70.86px;width:0.8px;height:7.92px;background:#e3e4e6"></div>
<div style="left:246px;top:70.86px;width:0.8px;height:7.92px;background:#e3e4e6"></div>
<div style="left:267.7px;top:70.86px;width:0.8px;height:7.92px;background:#e3e4e6"></div>
<div style="left:316.3px;top:70.86px;width:0.8px;height:7.92px;background:#e3e4e6"></div>
<div style="left:333.6px;top:70.86px;width:0.8px;height:7.92px;background:#e3e4e6"></div>
<div style="left:345.6px;top:70.86px;width:0.8px;height:7.92px;background:#e3e4e6"></div>
<div style="left:470.8px;top:70.86px;width:0.8px;height:7.92px;background:#e3e4e6"></div>
<div style="left:512.5px;top:70.86px;width:0.8px;height:7.92px;background:#e3e4e6"></div>
<div style="left:534.2px;top:70.86px;width:0.8px;height:7.92px;background:#e3e4e6"></div>
<div style="left:561px;top:70.86px;width:0.8px;height:7.92px;background:#e3e4e6"></div>
<div style="left:109px;top:78.78px;width:13px;height:7.92px;background:#e4e5e8;border-bottom:0.8px solid #d6d8db"></div>
<div class="t g" style="left:55.5px;width:120px;text-align:center;top:79.73px;font-size:6.15px;color:#333;transform:scaleX(0.900);transform-origin:50% 0;">10</div>
<div style="left:122px;top:78.78px;width:64px;height:7.92px;background:#e8b04a;border-bottom:0.8px solid #dbab5a"></div>
<div style="left:186px;top:78.78px;width:375px;height:7.92px;border-bottom:0.8px solid #e3e4e6"></div>
<div class="t g" style="left:123.5px;top:79.73px;font-size:6.15px;color:#303030;transform:scaleX(0.900);transform-origin:0 0;">01/05/2010</div>
<div class="t g" style="left:160.6px;top:79.73px;font-size:6.15px;color:#303030;transform:scaleX(0.900);transform-origin:0 0;">02</div>
<div class="t g" style="left:187.5px;top:79.73px;font-size:6.15px;color:#303030;transform:scaleX(0.900);transform-origin:0 0;">536016</div>
<div class="t g" style="left:211.7px;top:79.73px;font-size:6.15px;color:#303030;transform:scaleX(0.900);transform-origin:0 0;">05/04/2010</div>
<div class="t g" style="left:146.2px;width:120px;text-align:right;top:79.73px;font-size:6.15px;color:#303030;transform:scaleX(0.9);transform-origin:100% 0;">17959</div>
<div class="t g" style="left:269.2px;top:79.73px;font-size:6.15px;color:#303030;transform:scaleX(0.900);transform-origin:0 0;">Martin Manger</div>
<div class="t g" style="left:317.8px;top:79.73px;font-size:6.15px;color:#303030;transform:scaleX(0.900);transform-origin:0 0;">CD</div>
<div class="t g" style="left:224.10000000000002px;width:120px;text-align:right;top:79.73px;font-size:6.15px;color:#303030;transform:scaleX(0.9);transform-origin:100% 0;">6</div>
<div class="t g" style="left:347.1px;top:79.73px;font-size:6.15px;color:#303030;transform:scaleX(0.900);transform-origin:0 0;">Stravinsky, Dumbarton Oaks Concerto</div>
<div class="t g" style="left:472.3px;top:79.73px;font-size:6.15px;color:#303030;transform:scaleX(0.900);transform-origin:0 0;">SMCD 5120</div>
<div class="t g" style="left:412.70000000000005px;width:120px;text-align:right;top:79.73px;font-size:6.15px;color:#303030;transform:scaleX(0.9);transform-origin:100% 0;">8,99</div>
<div class="t g" style="left:439.5px;width:120px;text-align:right;top:79.73px;font-size:6.15px;color:#303030;transform:scaleX(0.9);transform-origin:100% 0;">53,94</div>
<div style="left:186px;top:78.78px;width:0.8px;height:7.92px;background:#e3e4e6"></div>
<div style="left:210.2px;top:78.78px;width:0.8px;height:7.92px;background:#e3e4e6"></div>
<div style="left:246px;top:78.78px;width:0.8px;height:7.92px;background:#e3e4e6"></div>
<div style="left:267.7px;top:78.78px;width:0.8px;height:7.92px;background:#e3e4e6"></div>
<div style="left:316.3px;top:78.78px;width:0.8px;height:7.92px;background:#e3e4e6"></div>
<div style="left:333.6px;top:78.78px;width:0.8px;height:7.92px;background:#e3e4e6"></div>
<div style="left:345.6px;top:78.78px;width:0.8px;height:7.92px;background:#e3e4e6"></div>
<div style="left:470.8px;top:78.78px;width:0.8px;height:7.92px;background:#e3e4e6"></div>
<div style="left:512.5px;top:78.78px;width:0.8px;height:7.92px;background:#e3e4e6"></div>
<div style="left:534.2px;top:78.78px;width:0.8px;height:7.92px;background:#e3e4e6"></div>
<div style="left:561px;top:78.78px;width:0.8px;height:7.92px;background:#e3e4e6"></div>
<div style="left:109px;top:86.7px;width:13px;height:7.92px;background:#e4e5e8;border-bottom:0.8px solid #d6d8db"></div>
<div class="t g" style="left:55.5px;width:120px;text-align:center;top:87.65px;font-size:6.15px;color:#333;transform:scaleX(0.900);transform-origin:50% 0;">11</div>
<div style="left:122px;top:86.7px;width:64px;height:7.92px;background:#e8b04a;border-bottom:0.8px solid #dbab5a"></div>
<div style="left:186px;top:86.7px;width:375px;height:7.92px;border-bottom:0.8px solid #e3e4e6"></div>
<div class="t g" style="left:123.5px;top:87.65px;font-size:6.15px;color:#303030;transform:scaleX(0.900);transform-origin:0 0;">01/05/2010</div>
<div class="t g" style="left:160.6px;top:87.65px;font-size:6.15px;color:#303030;transform:scaleX(0.900);transform-origin:0 0;">02</div>
<div class="t g" style="left:187.5px;top:87.65px;font-size:6.15px;color:#303030;transform:scaleX(0.900);transform-origin:0 0;">536016</div>
<div class="t g" style="left:211.7px;top:87.65px;font-size:6.15px;color:#303030;transform:scaleX(0.900);transform-origin:0 0;">05/04/2010</div>
<div class="t g" style="left:146.2px;width:120px;text-align:right;top:87.65px;font-size:6.15px;color:#303030;transform:scaleX(0.9);transform-origin:100% 0;">17959</div>
<div class="t g" style="left:269.2px;top:87.65px;font-size:6.15px;color:#303030;transform:scaleX(0.900);transform-origin:0 0;">Martin Manger</div>
<div class="t g" style="left:317.8px;top:87.65px;font-size:6.15px;color:#303030;transform:scaleX(0.900);transform-origin:0 0;"></div>
<div class="t g" style="left:224.10000000000002px;width:120px;text-align:right;top:87.65px;font-size:6.15px;color:#303030;transform:scaleX(0.9);transform-origin:100% 0;">1</div>
<div class="t g" style="left:347.1px;top:87.65px;font-size:6.15px;color:#303030;transform:scaleX(0.900);transform-origin:0 0;">Schubert, Sonate in e, D.566</div>
<div class="t g" style="left:472.3px;top:87.65px;font-size:6.15px;color:#303030;transform:scaleX(0.900);transform-origin:0 0;">AS-325</div>
<div class="t g" style="left:412.70000000000005px;width:120px;text-align:right;top:87.65px;font-size:6.15px;color:#303030;transform:scaleX(0.9);transform-origin:100% 0;">9,00</div>
<div class="t g" style="left:439.5px;width:120px;text-align:right;top:87.65px;font-size:6.15px;color:#303030;transform:scaleX(0.9);transform-origin:100% 0;">9,00</div>
<div style="left:186px;top:86.7px;width:0.8px;height:7.92px;background:#e3e4e6"></div>
<div style="left:210.2px;top:86.7px;width:0.8px;height:7.92px;background:#e3e4e6"></div>
<div style="left:246px;top:86.7px;width:0.8px;height:7.92px;background:#e3e4e6"></div>
<div style="left:267.7px;top:86.7px;width:0.8px;height:7.92px;background:#e3e4e6"></div>
<div style="left:316.3px;top:86.7px;width:0.8px;height:7.92px;background:#e3e4e6"></div>
<div style="left:333.6px;top:86.7px;width:0.8px;height:7.92px;background:#e3e4e6"></div>
<div style="left:345.6px;top:86.7px;width:0.8px;height:7.92px;background:#e3e4e6"></div>
<div style="left:470.8px;top:86.7px;width:0.8px;height:7.92px;background:#e3e4e6"></div>
<div style="left:512.5px;top:86.7px;width:0.8px;height:7.92px;background:#e3e4e6"></div>
<div style="left:534.2px;top:86.7px;width:0.8px;height:7.92px;background:#e3e4e6"></div>
<div style="left:561px;top:86.7px;width:0.8px;height:7.92px;background:#e3e4e6"></div>
<div style="left:109px;top:94.62px;width:13px;height:7.92px;background:#e4e5e8;border-bottom:0.8px solid #d6d8db"></div>
<div class="t g" style="left:55.5px;width:120px;text-align:center;top:95.57px;font-size:6.15px;color:#333;transform:scaleX(0.900);transform-origin:50% 0;">12</div>
<div style="left:122px;top:94.62px;width:64px;height:7.92px;background:#e8b04a;border-bottom:0.8px solid #dbab5a"></div>
<div style="left:186px;top:94.62px;width:375px;height:7.92px;border-bottom:0.8px solid #e3e4e6"></div>
<div class="t g" style="left:123.5px;top:95.57px;font-size:6.15px;color:#303030;transform:scaleX(0.900);transform-origin:0 0;">01/05/2010</div>
<div class="t g" style="left:160.6px;top:95.57px;font-size:6.15px;color:#303030;transform:scaleX(0.900);transform-origin:0 0;">02</div>
<div class="t g" style="left:187.5px;top:95.57px;font-size:6.15px;color:#303030;transform:scaleX(0.900);transform-origin:0 0;">536016</div>
<div class="t g" style="left:211.7px;top:95.57px;font-size:6.15px;color:#303030;transform:scaleX(0.900);transform-origin:0 0;">05/04/2010</div>
<div class="t g" style="left:146.2px;width:120px;text-align:right;top:95.57px;font-size:6.15px;color:#303030;transform:scaleX(0.9);transform-origin:100% 0;">17959</div>
<div class="t g" style="left:269.2px;top:95.57px;font-size:6.15px;color:#303030;transform:scaleX(0.900);transform-origin:0 0;">Martin Manger</div>
<div class="t g" style="left:317.8px;top:95.57px;font-size:6.15px;color:#303030;transform:scaleX(0.900);transform-origin:0 0;"></div>
<div class="t g" style="left:224.10000000000002px;width:120px;text-align:right;top:95.57px;font-size:6.15px;color:#303030;transform:scaleX(0.9);transform-origin:100% 0;">3</div>
<div class="t g" style="left:347.1px;top:95.57px;font-size:6.15px;color:#303030;transform:scaleX(0.900);transform-origin:0 0;">Mozart, Symphonie Nr.23 in D</div>
<div class="t g" style="left:472.3px;top:95.57px;font-size:6.15px;color:#303030;transform:scaleX(0.900);transform-origin:0 0;">CO-77884</div>
<div class="t g" style="left:412.70000000000005px;width:120px;text-align:right;top:95.57px;font-size:6.15px;color:#303030;transform:scaleX(0.9);transform-origin:100% 0;">8,99</div>
<div class="t g" style="left:439.5px;width:120px;text-align:right;top:95.57px;font-size:6.15px;color:#303030;transform:scaleX(0.9);transform-origin:100% 0;">26,97</div>
<div style="left:186px;top:94.62px;width:0.8px;height:7.92px;background:#e3e4e6"></div>
<div style="left:210.2px;top:94.62px;width:0.8px;height:7.92px;background:#e3e4e6"></div>
<div style="left:246px;top:94.62px;width:0.8px;height:7.92px;background:#e3e4e6"></div>
<div style="left:267.7px;top:94.62px;width:0.8px;height:7.92px;background:#e3e4e6"></div>
<div style="left:316.3px;top:94.62px;width:0.8px;height:7.92px;background:#e3e4e6"></div>
<div style="left:333.6px;top:94.62px;width:0.8px;height:7.92px;background:#e3e4e6"></div>
<div style="left:345.6px;top:94.62px;width:0.8px;height:7.92px;background:#e3e4e6"></div>
<div style="left:470.8px;top:94.62px;width:0.8px;height:7.92px;background:#e3e4e6"></div>
<div style="left:512.5px;top:94.62px;width:0.8px;height:7.92px;background:#e3e4e6"></div>
<div style="left:534.2px;top:94.62px;width:0.8px;height:7.92px;background:#e3e4e6"></div>
<div style="left:561px;top:94.62px;width:0.8px;height:7.92px;background:#e3e4e6"></div>
<div style="left:109px;top:102.53999999999999px;width:13px;height:7.92px;background:#e4e5e8;border-bottom:0.8px solid #d6d8db"></div>
<div class="t g" style="left:55.5px;width:120px;text-align:center;top:103.49px;font-size:6.15px;color:#333;transform:scaleX(0.900);transform-origin:50% 0;">13</div>
<div style="left:122px;top:102.53999999999999px;width:64px;height:7.92px;background:#e8b04a;border-bottom:0.8px solid #dbab5a"></div>
<div style="left:186px;top:102.53999999999999px;width:375px;height:7.92px;border-bottom:0.8px solid #e3e4e6"></div>
<div class="t g" style="left:123.5px;top:103.49px;font-size:6.15px;color:#303030;transform:scaleX(0.900);transform-origin:0 0;">01/05/2010</div>
<div class="t g" style="left:160.6px;top:103.49px;font-size:6.15px;color:#303030;transform:scaleX(0.900);transform-origin:0 0;">02</div>
<div class="t g" style="left:187.5px;top:103.49px;font-size:6.15px;color:#303030;transform:scaleX(0.900);transform-origin:0 0;">536016</div>
<div class="t g" style="left:211.7px;top:103.49px;font-size:6.15px;color:#303030;transform:scaleX(0.900);transform-origin:0 0;">05/04/2010</div>
<div class="t g" style="left:146.2px;width:120px;text-align:right;top:103.49px;font-size:6.15px;color:#303030;transform:scaleX(0.9);transform-origin:100% 0;">17959</div>
<div class="t g" style="left:269.2px;top:103.49px;font-size:6.15px;color:#303030;transform:scaleX(0.900);transform-origin:0 0;">Martin Manger</div>
<div class="t g" style="left:317.8px;top:103.49px;font-size:6.15px;color:#303030;transform:scaleX(0.900);transform-origin:0 0;"></div>
<div class="t g" style="left:224.10000000000002px;width:120px;text-align:right;top:103.49px;font-size:6.15px;color:#303030;transform:scaleX(0.9);transform-origin:100% 0;">6</div>
<div class="t g" style="left:347.1px;top:103.49px;font-size:6.15px;color:#303030;transform:scaleX(0.900);transform-origin:0 0;">Schönberg, Ode an Napoleon</div>
<div class="t g" style="left:472.3px;top:103.49px;font-size:6.15px;color:#303030;transform:scaleX(0.900);transform-origin:0 0;">CHAN 9116</div>
<div class="t g" style="left:412.70000000000005px;width:120px;text-align:right;top:103.49px;font-size:6.15px;color:#303030;transform:scaleX(0.9);transform-origin:100% 0;">9,59</div>
<div class="t g" style="left:439.5px;width:120px;text-align:right;top:103.49px;font-size:6.15px;color:#303030;transform:scaleX(0.9);transform-origin:100% 0;">57,54</div>
<div style="left:186px;top:102.53999999999999px;width:0.8px;height:7.92px;background:#e3e4e6"></div>
<div style="left:210.2px;top:102.53999999999999px;width:0.8px;height:7.92px;background:#e3e4e6"></div>
<div style="left:246px;top:102.53999999999999px;width:0.8px;height:7.92px;background:#e3e4e6"></div>
<div style="left:267.7px;top:102.53999999999999px;width:0.8px;height:7.92px;background:#e3e4e6"></div>
<div style="left:316.3px;top:102.53999999999999px;width:0.8px;height:7.92px;background:#e3e4e6"></div>
<div style="left:333.6px;top:102.53999999999999px;width:0.8px;height:7.92px;background:#e3e4e6"></div>
<div style="left:345.6px;top:102.53999999999999px;width:0.8px;height:7.92px;background:#e3e4e6"></div>
<div style="left:470.8px;top:102.53999999999999px;width:0.8px;height:7.92px;background:#e3e4e6"></div>
<div style="left:512.5px;top:102.53999999999999px;width:0.8px;height:7.92px;background:#e3e4e6"></div>
<div style="left:534.2px;top:102.53999999999999px;width:0.8px;height:7.92px;background:#e3e4e6"></div>
<div style="left:561px;top:102.53999999999999px;width:0.8px;height:7.92px;background:#e3e4e6"></div>
<div style="left:109px;top:110.46px;width:13px;height:7.92px;background:#e4e5e8;border-bottom:0.8px solid #d6d8db"></div>
<div class="t g" style="left:55.5px;width:120px;text-align:center;top:111.41px;font-size:6.15px;color:#333;transform:scaleX(0.900);transform-origin:50% 0;">14</div>
<div style="left:122px;top:110.46px;width:64px;height:7.92px;background:#e8b04a;border-bottom:0.8px solid #dbab5a"></div>
<div style="left:186px;top:110.46px;width:375px;height:7.92px;border-bottom:0.8px solid #e3e4e6"></div>
<div class="t g" style="left:123.5px;top:111.41px;font-size:6.15px;color:#303030;transform:scaleX(0.900);transform-origin:0 0;">01/05/2010</div>
<div class="t g" style="left:160.6px;top:111.41px;font-size:6.15px;color:#303030;transform:scaleX(0.900);transform-origin:0 0;">02</div>
<div class="t g" style="left:187.5px;top:111.41px;font-size:6.15px;color:#303030;transform:scaleX(0.900);transform-origin:0 0;">536029</div>
<div class="t g" style="left:211.7px;top:111.41px;font-size:6.15px;color:#303030;transform:scaleX(0.900);transform-origin:0 0;">14/04/2010</div>
<div class="t g" style="left:146.2px;width:120px;text-align:right;top:111.41px;font-size:6.15px;color:#303030;transform:scaleX(0.9);transform-origin:100% 0;">17959</div>
<div class="t g" style="left:269.2px;top:111.41px;font-size:6.15px;color:#303030;transform:scaleX(0.900);transform-origin:0 0;">Martin Manger</div>
<div class="t g" style="left:317.8px;top:111.41px;font-size:6.15px;color:#303030;transform:scaleX(0.900);transform-origin:0 0;">CD</div>
<div class="t g" style="left:224.10000000000002px;width:120px;text-align:right;top:111.41px;font-size:6.15px;color:#303030;transform:scaleX(0.9);transform-origin:100% 0;">2</div>
<div class="t g" style="left:347.1px;top:111.41px;font-size:6.15px;color:#303030;transform:scaleX(0.900);transform-origin:0 0;">Shostakovich, 24 Preludes for piano.</div>
<div class="t g" style="left:472.3px;top:111.41px;font-size:6.15px;color:#303030;transform:scaleX(0.900);transform-origin:0 0;">CDA 66620</div>
<div class="t g" style="left:412.70000000000005px;width:120px;text-align:right;top:111.41px;font-size:6.15px;color:#303030;transform:scaleX(0.9);transform-origin:100% 0;">5,39</div>
<div class="t g" style="left:439.5px;width:120px;text-align:right;top:111.41px;font-size:6.15px;color:#303030;transform:scaleX(0.9);transform-origin:100% 0;">10,78</div>
<div style="left:186px;top:110.46px;width:0.8px;height:7.92px;background:#e3e4e6"></div>
<div style="left:210.2px;top:110.46px;width:0.8px;height:7.92px;background:#e3e4e6"></div>
<div style="left:246px;top:110.46px;width:0.8px;height:7.92px;background:#e3e4e6"></div>
<div style="left:267.7px;top:110.46px;width:0.8px;height:7.92px;background:#e3e4e6"></div>
<div style="left:316.3px;top:110.46px;width:0.8px;height:7.92px;background:#e3e4e6"></div>
<div style="left:333.6px;top:110.46px;width:0.8px;height:7.92px;background:#e3e4e6"></div>
<div style="left:345.6px;top:110.46px;width:0.8px;height:7.92px;background:#e3e4e6"></div>
<div style="left:470.8px;top:110.46px;width:0.8px;height:7.92px;background:#e3e4e6"></div>
<div style="left:512.5px;top:110.46px;width:0.8px;height:7.92px;background:#e3e4e6"></div>
<div style="left:534.2px;top:110.46px;width:0.8px;height:7.92px;background:#e3e4e6"></div>
<div style="left:561px;top:110.46px;width:0.8px;height:7.92px;background:#e3e4e6"></div>
<div style="left:109px;top:118.38px;width:13px;height:7.92px;background:#e4e5e8;border-bottom:0.8px solid #d6d8db"></div>
<div class="t g" style="left:55.5px;width:120px;text-align:center;top:119.33px;font-size:6.15px;color:#333;transform:scaleX(0.900);transform-origin:50% 0;">15</div>
<div style="left:122px;top:118.38px;width:64px;height:7.92px;background:#e8b04a;border-bottom:0.8px solid #dbab5a"></div>
<div style="left:186px;top:118.38px;width:375px;height:7.92px;border-bottom:0.8px solid #e3e4e6"></div>
<div class="t g" style="left:123.5px;top:119.33px;font-size:6.15px;color:#303030;transform:scaleX(0.900);transform-origin:0 0;">01/05/2010</div>
<div class="t g" style="left:160.6px;top:119.33px;font-size:6.15px;color:#303030;transform:scaleX(0.900);transform-origin:0 0;">02</div>
<div class="t g" style="left:187.5px;top:119.33px;font-size:6.15px;color:#303030;transform:scaleX(0.900);transform-origin:0 0;">536029</div>
<div class="t g" style="left:211.7px;top:119.33px;font-size:6.15px;color:#303030;transform:scaleX(0.900);transform-origin:0 0;">14/04/2010</div>
<div class="t g" style="left:146.2px;width:120px;text-align:right;top:119.33px;font-size:6.15px;color:#303030;transform:scaleX(0.9);transform-origin:100% 0;">17959</div>
<div class="t g" style="left:269.2px;top:119.33px;font-size:6.15px;color:#303030;transform:scaleX(0.900);transform-origin:0 0;">Martin Manger</div>
<div class="t g" style="left:317.8px;top:119.33px;font-size:6.15px;color:#303030;transform:scaleX(0.900);transform-origin:0 0;">SACD</div>
<div class="t g" style="left:224.10000000000002px;width:120px;text-align:right;top:119.33px;font-size:6.15px;color:#303030;transform:scaleX(0.9);transform-origin:100% 0;">9</div>
<div class="t g" style="left:347.1px;top:119.33px;font-size:6.15px;color:#303030;transform:scaleX(0.900);transform-origin:0 0;">Balakirev, Symphonie Nr. 1</div>
<div class="t g" style="left:472.3px;top:119.33px;font-size:6.15px;color:#303030;transform:scaleX(0.900);transform-origin:0 0;">ENTPD 4110</div>
<div class="t g" style="left:412.70000000000005px;width:120px;text-align:right;top:119.33px;font-size:6.15px;color:#303030;transform:scaleX(0.9);transform-origin:100% 0;">9,59</div>
<div class="t g" style="left:439.5px;width:120px;text-align:right;top:119.33px;font-size:6.15px;color:#303030;transform:scaleX(0.9);transform-origin:100% 0;">86,31</div>
<div style="left:186px;top:118.38px;width:0.8px;height:7.92px;background:#e3e4e6"></div>
<div style="left:210.2px;top:118.38px;width:0.8px;height:7.92px;background:#e3e4e6"></div>
<div style="left:246px;top:118.38px;width:0.8px;height:7.92px;background:#e3e4e6"></div>
<div style="left:267.7px;top:118.38px;width:0.8px;height:7.92px;background:#e3e4e6"></div>
<div style="left:316.3px;top:118.38px;width:0.8px;height:7.92px;background:#e3e4e6"></div>
<div style="left:333.6px;top:118.38px;width:0.8px;height:7.92px;background:#e3e4e6"></div>
<div style="left:345.6px;top:118.38px;width:0.8px;height:7.92px;background:#e3e4e6"></div>
<div style="left:470.8px;top:118.38px;width:0.8px;height:7.92px;background:#e3e4e6"></div>
<div style="left:512.5px;top:118.38px;width:0.8px;height:7.92px;background:#e3e4e6"></div>
<div style="left:534.2px;top:118.38px;width:0.8px;height:7.92px;background:#e3e4e6"></div>
<div style="left:561px;top:118.38px;width:0.8px;height:7.92px;background:#e3e4e6"></div>
<div style="left:109px;top:126.3px;width:13px;height:7.92px;background:#e4e5e8;border-bottom:0.8px solid #d6d8db"></div>
<div class="t g" style="left:55.5px;width:120px;text-align:center;top:127.25px;font-size:6.15px;color:#333;transform:scaleX(0.900);transform-origin:50% 0;">16</div>
<div style="left:122px;top:126.3px;width:64px;height:7.92px;background:#e8b04a;border-bottom:0.8px solid #dbab5a"></div>
<div style="left:186px;top:126.3px;width:375px;height:7.92px;border-bottom:0.8px solid #e3e4e6"></div>
<div class="t g" style="left:123.5px;top:127.25px;font-size:6.15px;color:#303030;transform:scaleX(0.900);transform-origin:0 0;">01/05/2010</div>
<div class="t g" style="left:160.6px;top:127.25px;font-size:6.15px;color:#303030;transform:scaleX(0.900);transform-origin:0 0;">02</div>
<div class="t g" style="left:187.5px;top:127.25px;font-size:6.15px;color:#303030;transform:scaleX(0.900);transform-origin:0 0;">536029</div>
<div class="t g" style="left:211.7px;top:127.25px;font-size:6.15px;color:#303030;transform:scaleX(0.900);transform-origin:0 0;">14/04/2010</div>
<div class="t g" style="left:146.2px;width:120px;text-align:right;top:127.25px;font-size:6.15px;color:#303030;transform:scaleX(0.9);transform-origin:100% 0;">17959</div>
<div class="t g" style="left:269.2px;top:127.25px;font-size:6.15px;color:#303030;transform:scaleX(0.900);transform-origin:0 0;">Martin Manger</div>
<div class="t g" style="left:317.8px;top:127.25px;font-size:6.15px;color:#303030;transform:scaleX(0.900);transform-origin:0 0;"></div>
<div class="t g" style="left:224.10000000000002px;width:120px;text-align:right;top:127.25px;font-size:6.15px;color:#303030;transform:scaleX(0.9);transform-origin:100% 0;">1</div>
<div class="t g" style="left:347.1px;top:127.25px;font-size:6.15px;color:#303030;transform:scaleX(0.900);transform-origin:0 0;">x</div>
<div class="t g" style="left:472.3px;top:127.25px;font-size:6.15px;color:#303030;transform:scaleX(0.900);transform-origin:0 0;">x</div>
<div class="t g" style="left:412.70000000000005px;width:120px;text-align:right;top:127.25px;font-size:6.15px;color:#303030;transform:scaleX(0.9);transform-origin:100% 0;">x</div>
<div class="t g" style="left:439.5px;width:120px;text-align:right;top:127.25px;font-size:6.15px;color:#303030;transform:scaleX(0.9);transform-origin:100% 0;">x</div>
<div style="left:186px;top:126.3px;width:0.8px;height:7.92px;background:#e3e4e6"></div>
<div style="left:210.2px;top:126.3px;width:0.8px;height:7.92px;background:#e3e4e6"></div>
<div style="left:246px;top:126.3px;width:0.8px;height:7.92px;background:#e3e4e6"></div>
<div style="left:267.7px;top:126.3px;width:0.8px;height:7.92px;background:#e3e4e6"></div>
<div style="left:316.3px;top:126.3px;width:0.8px;height:7.92px;background:#e3e4e6"></div>
<div style="left:333.6px;top:126.3px;width:0.8px;height:7.92px;background:#e3e4e6"></div>
<div style="left:345.6px;top:126.3px;width:0.8px;height:7.92px;background:#e3e4e6"></div>
<div style="left:470.8px;top:126.3px;width:0.8px;height:7.92px;background:#e3e4e6"></div>
<div style="left:512.5px;top:126.3px;width:0.8px;height:7.92px;background:#e3e4e6"></div>
<div style="left:534.2px;top:126.3px;width:0.8px;height:7.92px;background:#e3e4e6"></div>
<div style="left:561px;top:126.3px;width:0.8px;height:7.92px;background:#e3e4e6"></div>
</div>
<div style="left:122px;top:332.1px;width:37px;height:7.6px;background:transparent;border:1px solid #6b5a33"></div>
<div style="left:109px;top:453.4px;width:637px;height:5.2px;background:#a9abb0;"></div>
<div style="left:746px;top:324.2px;width:6px;height:129.2px;background:#a9abb0;"></div>
<div style="left:746.6px;top:332.7px;width:5.4px;height:17px;background:#d6d7da;"></div>
<div style="left:108px;top:458.8px;width:645px;height:12.4px;background:#e2e3e5;"></div>
<div style="left:108px;top:459.2px;width:645px;height:2.4px;background:#eeeff1;"></div>
<svg style="left:0;top:0" width="900" height="474"><path d="M747.5 329.3L749 327.7L750.5 329.3z" fill="#5d5f63"/></svg>
<svg style="left:0;top:0" width="900" height="474"><path d="M120.3 454.5L118.7 456L120.3 457.5z" fill="#5d5f63"/></svg>
<svg style="left:0;top:0" width="900" height="474"><path d="M741.1 454.5L742.6999999999999 456L741.1 457.5z" fill="#5d5f63"/></svg>
<div style="left:755px;top:71px;width:142px;height:400px;background:#f7f9f9;border-left:1px solid #d9dbde"></div>
<div style="left:756px;top:71px;width:141px;height:13px;background:#eceef0;"></div>
<div class="t" style="left:759.7px;top:76.85px;font-size:6.15px;color:#333;transform:scaleX(0.900);transform-origin:0 0;">Feldeigenschaften</div>
<div style="left:808px;top:78.5px;width:68px;height:1px;background:repeating-linear-gradient(90deg,#d3d5d8 0 1px,transparent 1px 2px)"></div>
<div style="left:809px;top:79.5px;width:67px;height:1px;background:repeating-linear-gradient(90deg,#d3d5d8 0 1px,transparent 1px 2px)"></div>
<svg style="left:880px;top:78px" width="4" height="3"><path d="M0.3 0.5 L2 2.3 L3.7 0.5" fill="none" stroke="#666" stroke-width="0.7"/></svg>
<svg style="left:888px;top:76px" width="4" height="7"><path d="M1.1 0.3h1.8v3.2h-1.8z" fill="#555"/><path d="M0.2 3.6h3.6M2 3.6v2.8" stroke="#555" stroke-width="0.7"/></svg>
<div style="left:889.6px;top:84.3px;width:6.8px;height:374.9px;background:#a9abb0;border-radius:1.5px 1.5px 0 0"></div>
<svg style="left:0;top:0" width="900" height="474"><path d="M891.5 89.2L893 87.60000000000001L894.5 89.2z" fill="#5d5f63"/></svg>
<svg style="left:0;top:0" width="900" height="474"><path d="M891.5 453.9L893 455.5L894.5 453.9z" fill="#5d5f63"/></svg>
<div class="t" style="left:761.6px;top:99.25px;font-size:6.15px;color:#333;transform:scaleX(0.900);transform-origin:0 0;">Name:</div>
<div style="left:800.5px;top:96.1px;width:86.3px;height:10.7px;background:#ffffff;border:1px solid #cdd0d4"></div>
<div class="t" style="left:803px;top:99.25px;font-size:6.15px;color:#333;transform:scaleX(0.900);transform-origin:0 0;">Berichtsdatum</div>
<div class="t" style="left:761.6px;top:114.75px;font-size:6.15px;color:#333;transform:scaleX(0.900);transform-origin:0 0;">Musterbreite:</div>
<div style="left:800.5px;top:112.2px;width:25.8px;height:9.8px;background:#ffffff;border:1px solid #cdd0d4"></div>
<div class="t" style="left:803px;top:114.55px;font-size:6.15px;color:#333;transform:scaleX(0.900);transform-origin:0 0;">8</div>
<div class="t" style="left:761.6px;top:130.85px;font-size:6.15px;color:#333;transform:scaleX(0.900);transform-origin:0 0;">Typ:</div>
<div style="left:800.5px;top:128.2px;width:65.4px;height:9.7px;background:#e2e4e7;border:1px solid #cdd0d4;border-radius:1.2px"></div>
<div class="t" style="left:803px;top:130.75px;font-size:6.15px;color:#333;transform:scaleX(0.900);transform-origin:0 0;">Datum/Uhrzeit</div>
<div class="t" style="left:761.6px;top:146.45px;font-size:6.15px;color:#333;transform:scaleX(0.900);transform-origin:0 0;">Dezimalstellen:</div>
<div style="left:800.5px;top:143.7px;width:25.8px;height:9.7px;background:#f7f9f9;border:1px solid #dcdee1"></div>
<div class="t" style="left:803px;top:146.25px;font-size:6.15px;color:#aaa;transform:scaleX(0.900);transform-origin:0 0;">0</div>
<div class="t" style="left:761.6px;top:162.05px;font-size:6.15px;color:#333;transform:scaleX(0.900);transform-origin:0 0;">Format:</div>
<div style="left:800.5px;top:159.8px;width:65.3px;height:9.8px;background:#e2e4e7;border:1px solid #cdd0d4;border-radius:1.2px"></div>
<div class="t" style="left:803px;top:162.25px;font-size:6.15px;color:#333;transform:scaleX(0.900);transform-origin:0 0;">Kurzes Datum</div>
<div class="t" style="left:761.6px;top:177.75px;font-size:6.15px;color:#333;transform:scaleX(0.900);transform-origin:0 0;">Anzeigebreite:</div>
<div style="left:800.5px;top:175.5px;width:26px;height:10.1px;background:#ffffff;border:1px solid #cdd0d4"></div>
<div class="t" style="left:803px;top:178.05px;font-size:6.15px;color:#333;transform:scaleX(0.900);transform-origin:0 0;">10</div>
<div class="t" style="left:761.6px;top:194.25px;font-size:6.15px;color:#333;transform:scaleX(0.900);transform-origin:0 0;">Ausrichtung:</div>
<div style="left:800.5px;top:192px;width:65.3px;height:9.6px;background:#e2e4e7;border:1px solid #cdd0d4;border-radius:1.2px"></div>
<div class="t" style="left:803px;top:194.35px;font-size:6.15px;color:#333;transform:scaleX(0.900);transform-origin:0 0;">Links</div>
<svg style="left:821px;top:113.7px" width="4" height="8"><path d="M0.3 2.8 L2 0.8 L3.7 2.8z M0.3 4.5 L2 6.5 L3.7 4.5z" fill="#444"/></svg>
<svg style="left:821px;top:177.0px" width="4" height="8"><path d="M0.3 2.8 L2 0.8 L3.7 2.8z M0.3 4.5 L2 6.5 L3.7 4.5z" fill="#444"/></svg>
<svg style="left:821px;top:145.7px" width="4" height="8"><path d="M0.3 2.8 L2 0.8 L3.7 2.8z M0.3 4.5 L2 6.5 L3.7 4.5z" fill="#bbb"/></svg>
<svg style="left:859.5px;top:132.1px" width="4" height="3"><path d="M0.3 0.3 L2 2.1 L3.7 0.3" fill="none" stroke="#333" stroke-width="0.8"/></svg>
<svg style="left:859.5px;top:163.7px" width="4" height="3"><path d="M0.3 0.3 L2 2.1 L3.7 0.3" fill="none" stroke="#333" stroke-width="0.8"/></svg>
<svg style="left:859.5px;top:195.8px" width="4" height="3"><path d="M0.3 0.3 L2 2.1 L3.7 0.3" fill="none" stroke="#333" stroke-width="0.8"/></svg>
<div style="left:761.4px;top:210.2px;width:6.3px;height:6.3px;background:#ffffff;border:0.8px solid #b5b8bc;border-radius:0.8px"></div>
<div class="t" style="left:770.8px;top:210.85px;font-size:6.15px;color:#333;transform:scaleX(0.900);transform-origin:0 0;">Aus vorherigem Datensatz kopieren</div>
<div style="left:761.4px;top:222.1px;width:6.3px;height:6.3px;background:#ffffff;border:0.8px solid #b5b8bc;border-radius:0.8px"></div>
<div class="t" style="left:770.8px;top:222.75px;font-size:6.15px;color:#333;transform:scaleX(0.900);transform-origin:0 0;">Verdeckt</div>
<div style="left:769px;top:238.8px;width:51.4px;height:9.6px;background:#eceef0;border:1px solid #d6d8db;border-radius:1px"></div>
<div class="t" style="left:734.7px;width:120px;text-align:center;top:241.15px;font-size:6.15px;color:#a9abae;transform:scaleX(0.900);transform-origin:50% 0;">&lt; Vorheriges Feld</div>
<div style="left:829.3px;top:238.8px;width:47.4px;height:9.6px;background:#e4e6e9;border:1px solid #c4c6ca;border-radius:1px"></div>
<div class="t" style="left:793px;width:120px;text-align:center;top:241.15px;font-size:6.15px;color:#333;transform:scaleX(0.900);transform-origin:50% 0;">Nächstes Feld &gt;</div>
<div style="left:756px;top:459px;width:141px;height:12px;background:#e2e3e5;border-top:1px solid #d5d6d8"></div>
<div style="left:756px;top:460px;width:141px;height:2px;background:#e9eaec;"></div>
<div class="t" style="left:795.8px;top:466.15px;font-size:5.03px;color:#444;transform:scaleX(0.900);transform-origin:0 0;">Seite 1</div>
<div class="t" style="left:817.5px;top:466.15px;font-size:5.03px;color:#444;transform:scaleX(0.900);transform-origin:0 0;">100%</div>
<div style="left:841px;top:467.6px;width:46px;height:0.7px;background:#b4b6b9;"></div>
<div class="t" style="left:835.6px;top:465.15px;font-size:5.03px;color:#888;transform:scaleX(0.900);transform-origin:0 0;">−</div>
<div class="t" style="left:891px;top:465.15px;font-size:5.03px;color:#888;transform:scaleX(0.900);transform-origin:0 0;">+</div>
<div style="left:857.3px;top:465.3px;width:2px;height:4.8px;background:#6b6d70;border-radius:0.6px"></div>
<div style="left:0px;top:0px;width:900px;height:1px;background:rgba(254,122,32,0.45);"></div>
<div style="left:0px;top:0px;width:1px;height:474px;background:rgba(254,122,32,0.45);"></div>
<div style="left:899px;top:0px;width:1px;height:474px;background:rgba(254,122,32,0.35);"></div>
<div style="left:1px;top:1px;width:898px;height:2px;background:#fe7a20;"></div>
<div style="left:1px;top:1px;width:2px;height:472px;background:#fe7a20;"></div>
<div style="left:897px;top:1px;width:2px;height:472px;background:#fe7a20;"></div>
<div style="left:1px;top:69.2px;width:898px;height:2.6px;background:#fe7a20;"></div>
<div style="left:1px;top:471px;width:898px;height:3px;background:#fe7a20;"></div>
<div style="left:106px;top:69px;width:2.3px;height:404px;background:#fe7a20;"></div>
<div style="left:108.3px;top:71px;width:0.8px;height:400px;background:rgba(254,122,32,0.4);"></div>
<div style="left:752.6px;top:69px;width:2.4px;height:404px;background:#fe7a20;"></div>
<div style="left:815.55px;top:15.549999999999997px;width:34.5px;height:34.5px;border-radius:50%;background:#fe7a20"></div>
<div class="t" style="left:822.8px;width:20px;text-align:center;top:25.4px;font-size:16.5px;font-weight:bold;color:#fff">1</div>
<div style="left:43.75px;top:156.45px;width:34.5px;height:34.5px;border-radius:50%;background:#fe7a20"></div>
<div class="t" style="left:51px;width:20px;text-align:center;top:166.29999999999998px;font-size:16.5px;font-weight:bold;color:#fff">2</div>
<div style="left:633.55px;top:83.95px;width:34.5px;height:34.5px;border-radius:50%;background:#fe7a20"></div>
<div class="t" style="left:640.8px;width:20px;text-align:center;top:93.8px;font-size:16.5px;font-weight:bold;color:#fff">3</div>
<div style="left:849.35px;top:87.95px;width:34.5px;height:34.5px;border-radius:50%;background:#fe7a20"></div>
<div class="t" style="left:856.6px;width:20px;text-align:center;top:97.8px;font-size:16.5px;font-weight:bold;color:#fff">4</div>
<div style="left:633.75px;top:403.55px;width:34.5px;height:34.5px;border-radius:50%;background:#fe7a20"></div>
<div class="t" style="left:641px;width:20px;text-align:center;top:413.40000000000003px;font-size:16.5px;font-weight:bold;color:#fff">5</div>
</body></html>
